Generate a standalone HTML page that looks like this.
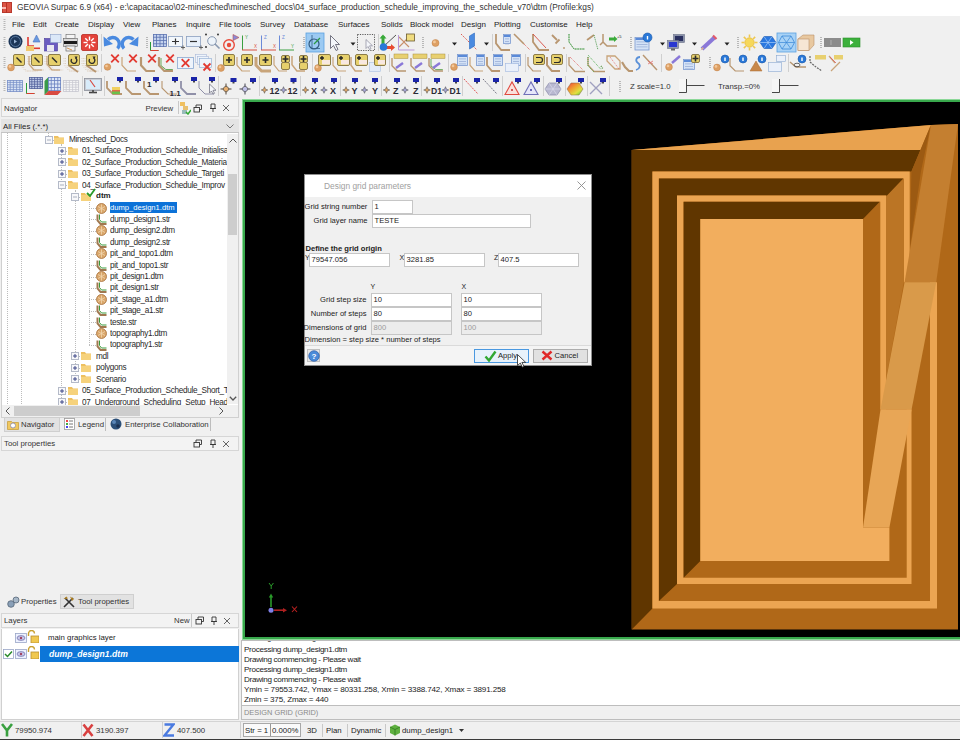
<!DOCTYPE html>
<html><head><meta charset="utf-8">
<style>
*{margin:0;padding:0;box-sizing:border-box}
html,body{width:960px;height:740px;overflow:hidden;background:#f0f0f0;font-family:"Liberation Sans",sans-serif;color:#222;position:relative}
.a{position:absolute}
.t{position:absolute;white-space:nowrap;line-height:1}
</style></head>
<body>
<!-- title bar -->
<div class="a" style="left:0;top:0;width:960px;height:16px;background:#fff"></div>
<div class="a" style="left:1.5px;top:2px;width:10.5px;height:10.5px;background:#dc5444;border:0.5px solid #b83a2e"></div><div class="a" style="left:6px;top:2.5px;width:1px;height:10px;background:#b83226"></div><div class="a" style="left:2px;top:7px;width:4px;height:1.6px;background:#f8b8b0"></div>
<div class="t" style="left:17px;top:3px;font-size:8.34px;color:#333">GEOVIA Surpac 6.9 (x64) - e:\capacitacao\02-minesched\minesched_docs\04_surface_production_schedule_improving_the_schedule_v70\dtm (Profile:kgs)</div>

<!-- menu -->
<div class="a" style="left:0;top:16px;width:960px;height:17px;background:#f0f0f0"></div>
<div id="menu" style="font-size:8px;color:#222">
<span class="t" style="left:12px;top:21px">File</span>
<span class="t" style="left:33px;top:21px">Edit</span>
<span class="t" style="left:55px;top:21px">Create</span>
<span class="t" style="left:88px;top:21px">Display</span>
<span class="t" style="left:123px;top:21px">View</span>
<span class="t" style="left:152px;top:21px">Planes</span>
<span class="t" style="left:186px;top:21px">Inquire</span>
<span class="t" style="left:219px;top:21px">File tools</span>
<span class="t" style="left:260px;top:21px">Survey</span>
<span class="t" style="left:294px;top:21px">Database</span>
<span class="t" style="left:338px;top:21px">Surfaces</span>
<span class="t" style="left:381px;top:21px">Solids</span>
<span class="t" style="left:410px;top:21px">Block model</span>
<span class="t" style="left:461px;top:21px">Design</span>
<span class="t" style="left:494px;top:21px">Plotting</span>
<span class="t" style="left:530px;top:21px">Customise</span>
<span class="t" style="left:576px;top:21px">Help</span>
</div>

<!-- TOOLBARS -->
<div id="tb"><svg class="a" style="left:0;top:0" width="960" height="100" viewBox="0 0 960 100"><rect x="3.5" y="19" width="2" height="1" fill="#b8b8b8"/><rect x="3.5" y="21" width="2" height="1" fill="#b8b8b8"/><rect x="3.5" y="23" width="2" height="1" fill="#b8b8b8"/><rect x="3.5" y="25" width="2" height="1" fill="#b8b8b8"/><rect x="3.5" y="27" width="2" height="1" fill="#b8b8b8"/><rect x="3.5" y="29" width="2" height="1" fill="#b8b8b8"/><rect x="3.5" y="37" width="2" height="1" fill="#b8b8b8"/><rect x="3.5" y="39" width="2" height="1" fill="#b8b8b8"/><rect x="3.5" y="41" width="2" height="1" fill="#b8b8b8"/><rect x="3.5" y="43" width="2" height="1" fill="#b8b8b8"/><rect x="3.5" y="45" width="2" height="1" fill="#b8b8b8"/><rect x="3.5" y="47" width="2" height="1" fill="#b8b8b8"/><circle cx="15.5" cy="41.5" r="7" fill="#1c3658"/><circle cx="15.5" cy="41.5" r="5" fill="none" stroke="#6a8ab0" stroke-width="0.8"/><path d="M14 39.5l3 2-3 2z" fill="#9ab4d4"/><path d="M28 37v9h6" stroke="#e03a30" stroke-width="1.6" fill="none"/><rect x="26" y="46" width="8" height="5" fill="#f0c870"/><path d="M33 42l3.5-7 3.5 7z" fill="#6a9ae0" stroke="#4a70c0" stroke-width="0.6"/><rect x="34" y="47.5" width="6" height="1.6" fill="#e03a30"/><rect x="44.5" y="38.5" width="13" height="12.5" fill="#6a5cc0" stroke="#4a3c98" stroke-width="0.6"/><rect x="47" y="45" width="7" height="6" fill="#e8e8f0"/><rect x="50.5" y="34.5" width="10.5" height="8" fill="#dbe8f8" stroke="#8aa0c8" stroke-width="0.6"/><rect x="66" y="34.5" width="9" height="4" fill="#f4f4f4" stroke="#666" stroke-width="0.6"/><rect x="63.5" y="38.5" width="14" height="8" fill="#d8d8d8" stroke="#666" stroke-width="0.6"/><rect x="64" y="41" width="13" height="3" fill="#1a1a1a"/><rect x="66" y="46" width="9" height="5" fill="#f0f0f0" stroke="#555" stroke-width="0.6"/><path d="M67 48l5 2" stroke="#c8782a" stroke-width="0.8"/><rect x="81.5" y="34.5" width="16" height="16" rx="1.5" fill="#e4423a" stroke="#b82a22" stroke-width="0.8"/><path d="M91.7 42.5L95.5 42.5" stroke="#fff" stroke-width="1.4"/><path d="M91.05563491861041 44.0556349186104L93.74264068711929 46.742640687119284" stroke="#fff" stroke-width="1.4"/><path d="M89.5 44.7L89.5 48.5" stroke="#fff" stroke-width="1.4"/><path d="M87.94436508138959 44.0556349186104L85.25735931288071 46.742640687119284" stroke="#fff" stroke-width="1.4"/><path d="M87.3 42.5L83.5 42.5" stroke="#fff" stroke-width="1.4"/><path d="M87.94436508138959 40.9443650813896L85.25735931288071 38.257359312880716" stroke="#fff" stroke-width="1.4"/><path d="M89.5 40.3L89.5 36.5" stroke="#fff" stroke-width="1.4"/><path d="M91.05563491861041 40.94436508138959L93.74264068711929 38.257359312880716" stroke="#fff" stroke-width="1.4"/><rect x="101" y="34" width="1" height="17" fill="#cfcfcf"/><path d="M117.5 48.5A6.3 6.3 0 0 0 108 39.5" stroke="#4a8ae0" stroke-width="3.4" fill="none"/><path d="M103.5 36.5l0.5 10 9-2.5z" fill="#4a8ae0"/><path d="M124 48.5A6.3 6.3 0 0 1 133.5 39.5" stroke="#4a8ae0" stroke-width="3.4" fill="none"/><path d="M138.5 36.5l-0.5 10-9-2.5z" fill="#4a8ae0"/><rect x="146" y="37" width="2" height="1" fill="#b8b8b8"/><rect x="146" y="39" width="2" height="1" fill="#b8b8b8"/><rect x="146" y="41" width="2" height="1" fill="#b8b8b8"/><rect x="146" y="43" width="2" height="1" fill="#b8b8b8"/><rect x="146" y="45" width="2" height="1" fill="#b8b8b8"/><rect x="146" y="47" width="2" height="1" fill="#b8b8b8"/><rect x="153.5" y="34.5" width="13" height="12" fill="#c4d2ee" stroke="#5a72b0" stroke-width="0.8"/><path d="M156.5 34v13M153 37.25h14" stroke="#5a72b0" stroke-width="0.8"/><path d="M160.0 34v13M153 40.5h14" stroke="#5a72b0" stroke-width="0.8"/><path d="M163.5 34v13M153 43.75h14" stroke="#5a72b0" stroke-width="0.8"/><path d="M150.5 42v8.5h8" stroke="#2a9a3a" stroke-width="1" fill="none"/><path d="M150.5 50.5h8" stroke="#d84030" stroke-width="1"/><rect x="168.5" y="36.5" width="14" height="10" fill="#f4f8fc" stroke="#8aa0c0" stroke-width="0.8"/><path d="M172 41.5h7M175.5 38.5v6" stroke="#333" stroke-width="1.2"/><path d="M181 47.5h4M183 45.5v4" stroke="#555" stroke-width="0.9"/><rect x="186.5" y="36.5" width="14" height="10" fill="#e8f0fa" stroke="#8aa0c0" stroke-width="0.8"/><path d="M190 41.5h7" stroke="#333" stroke-width="1.2"/><path d="M199 47.5h4M201 45.5v4" stroke="#555" stroke-width="0.9"/><circle cx="212" cy="41" r="4.3" fill="#eef4fa" stroke="#8898b0" stroke-width="1"/><path d="M215 44l4.5 4.5" stroke="#8898b0" stroke-width="1.6"/><circle cx="206" cy="34.5" r="0.9" fill="#222"/><circle cx="218" cy="34.5" r="0.9" fill="#222"/><circle cx="206" cy="47" r="0.9" fill="#222"/><circle cx="229" cy="45" r="5.3" fill="none" stroke="#e84a3a" stroke-width="1.4"/><circle cx="229" cy="45" r="2.2" fill="#e84a3a"/><path d="M233 34.5l6 3-6 3z" fill="#8a8ad8" stroke="#c0504a" stroke-width="0.6"/><path d="M242.5 35.5v14.5" stroke="#3aa040" stroke-width="1"/><path d="M242 50h15" stroke="#d85040" stroke-width="1"/><text x="245" y="39" font-family="Liberation Sans" font-size="4.5" fill="#3aa040">Y</text><text x="254" y="47.5" font-family="Liberation Sans" font-size="4.5" fill="#d85040">X</text><path d="M261.5 35.5v14.5" stroke="#6a8ad8" stroke-width="1"/><path d="M261 50h15" stroke="#d85040" stroke-width="1"/><text x="264" y="39" font-family="Liberation Sans" font-size="4.5" fill="#6a8ad8">Z</text><text x="273" y="47.5" font-family="Liberation Sans" font-size="4.5" fill="#d85040">X</text><path d="M279.5 35.5v14.5" stroke="#6a8ad8" stroke-width="1"/><path d="M279 50h15" stroke="#3aa040" stroke-width="1"/><text x="282" y="39" font-family="Liberation Sans" font-size="4.5" fill="#6a8ad8">Z</text><text x="291" y="47.5" font-family="Liberation Sans" font-size="4.5" fill="#3aa040">Y</text><rect x="303" y="37" width="2" height="1" fill="#b8b8b8"/><rect x="303" y="39" width="2" height="1" fill="#b8b8b8"/><rect x="303" y="41" width="2" height="1" fill="#b8b8b8"/><rect x="303" y="43" width="2" height="1" fill="#b8b8b8"/><rect x="303" y="45" width="2" height="1" fill="#b8b8b8"/><rect x="303" y="47" width="2" height="1" fill="#b8b8b8"/><rect x="306" y="33" width="18" height="19" fill="#9ccaf2" stroke="#5aa0e0" stroke-width="0.8"/><circle cx="314" cy="44" r="5" fill="none" stroke="#305a80" stroke-width="1.2"/><path d="M312 35v13.5h8" stroke="#305a80" stroke-width="0.8" fill="none"/><path d="M314 44l6-6" stroke="#2a9a40" stroke-width="1.3"/><path d="M330.5 35.5v13l3-3 2.5 5 2-1-2.5-5h4z" fill="#f4f6fa" stroke="#556" stroke-width="0.8"/><path d="M350.5 42.5h5l-2.5 3z" fill="#222"/><rect x="357.5" y="34.5" width="17" height="16" fill="none" stroke="#333" stroke-width="0.8" stroke-dasharray="1.2 1.2"/><path d="M366 39.5v9l2-2 1.5 3 1.5-0.7-1.5-3h3z" fill="#f4f6fa" stroke="#889" stroke-width="0.7"/><rect x="378" y="34" width="1" height="17" fill="#cfcfcf"/><path d="M383 44V36" stroke="#3aaa3a" stroke-width="3"/><path d="M379.5 38.5l3.5-4 3.5 4z" fill="#3aaa3a"/><path d="M384 47.5h9" stroke="#e84a30" stroke-width="3"/><path d="M391 44l4 3.5-4 3.5z" fill="#e84a30"/><path d="M384 46l12-11" stroke="#555" stroke-width="1"/><circle cx="383.5" cy="47" r="3.8" fill="#2a78d8"/><path d="M399 37l5 5 5-5M399 47l5-5 5 5" stroke="#c8906a" stroke-width="1.2" fill="none"/><path d="M398.5 35v15h16" stroke="#b898d8" stroke-width="1" fill="none"/><rect x="406.5" y="34" width="8" height="7" fill="#f0dc80" stroke="#6a5a30" stroke-width="0.8"/><rect x="422" y="37" width="2" height="1" fill="#b8b8b8"/><rect x="422" y="39" width="2" height="1" fill="#b8b8b8"/><rect x="422" y="41" width="2" height="1" fill="#b8b8b8"/><rect x="422" y="43" width="2" height="1" fill="#b8b8b8"/><rect x="422" y="45" width="2" height="1" fill="#b8b8b8"/><rect x="422" y="47" width="2" height="1" fill="#b8b8b8"/><circle cx="435.5" cy="43" r="3.5" fill="#dea064" stroke="#c08048" stroke-width="0.5"/><circle cx="434.45" cy="41.95" r="1.4000000000000001" fill="#f3c89a"/><path d="M452 42.5h5l-2.5 3z" fill="#222"/><path d="M461 34l16 16" stroke="#d84a40" stroke-width="0.9" stroke-dasharray="1.5 1"/><path d="M469.5 36l5-3v13l-5 3z" fill="#4a8ae0" stroke="#2a6ac0" stroke-width="0.6"/><path d="M484 42.5h5l-2.5 3z" fill="#222"/><rect x="492" y="34" width="1" height="17" fill="#cfcfcf"/><path d="M496 34v9.350000000000001l5.25 6.65h8.75" stroke="#b89670" stroke-width="1.8" fill="none"/><rect x="503.5" y="34.5" width="7" height="9" fill="#d4e2f6" stroke="#7a9ad0" stroke-width="0.8"/><rect x="504" y="35" width="6" height="2" fill="#5a8ad8"/><rect x="505" y="38.5" width="4" height="0.8" fill="#9ab0d8"/><rect x="505" y="41.0" width="4" height="0.8" fill="#9ab0d8"/><rect x="505" y="43.5" width="4" height="0.8" fill="#9ab0d8"/><path d="M514 34l10 10" stroke="#b89670" stroke-width="1.6"/><path d="M524 44l6 6" stroke="#d84a40" stroke-width="0.9" stroke-dasharray="1 1"/><path d="M533 34v8l6 8h10" stroke="#b89670" stroke-width="1.8" fill="none"/><path d="M533 34l13 14" stroke="#d84a40" stroke-width="0.9"/><path d="M552 35l5 5M555.5 43.5l4-4" stroke="#b89670" stroke-width="1.8"/><circle cx="564" cy="48" r="0.9" fill="#b89670"/><path d="M569 34v8l5 7h11" stroke="#3aa04a" stroke-width="1" stroke-dasharray="1.5 1" fill="none"/><path d="M569 34v8l5 7h11" stroke="#6aa05a" stroke-width="0.5" fill="none"/><path d="M587 40l7-5" stroke="#b89670" stroke-width="1.8"/><path d="M594 35l4 15" stroke="#5aa05a" stroke-width="1" stroke-dasharray="1.2 1"/><path d="M603 34v8l4 4h10M600 45l3-3" stroke="#b89670" stroke-width="1.5" fill="none"/><path d="M609 39h6" stroke="#3aaa3a" stroke-width="3"/><path d="M614 36l3.5 3-3.5 3z" fill="#3aaa3a"/><text x="617" y="38" font-family="Liberation Sans" font-size="4" fill="#222">+5</text><rect x="630" y="37" width="2" height="1" fill="#b8b8b8"/><rect x="630" y="39" width="2" height="1" fill="#b8b8b8"/><rect x="630" y="41" width="2" height="1" fill="#b8b8b8"/><rect x="630" y="43" width="2" height="1" fill="#b8b8b8"/><rect x="630" y="45" width="2" height="1" fill="#b8b8b8"/><rect x="630" y="47" width="2" height="1" fill="#b8b8b8"/><rect x="635.0" y="37.5" width="14" height="12.5" fill="#d4e2f6" stroke="#7a9ad0" stroke-width="0.8"/><rect x="635.5" y="38" width="13" height="2" fill="#5a8ad8"/><rect x="636.5" y="41.5" width="11" height="0.8" fill="#9ab0d8"/><rect x="636.5" y="44.0" width="11" height="0.8" fill="#9ab0d8"/><rect x="636.5" y="46.5" width="11" height="0.8" fill="#9ab0d8"/><circle cx="647.5" cy="37.5" r="4.5" fill="#2a78d8" stroke="#1a58a8" stroke-width="0.6"/><rect x="646.8" y="36.0" width="1.4" height="3.5" fill="#fff"/><path d="M660 42.5h5l-2.5 3z" fill="#222"/><rect x="673.5" y="34.5" width="11" height="8" fill="#8890a8" stroke="#6a7088" stroke-width="0.6"/><rect x="675" y="36" width="8" height="5" fill="#2a3060"/><rect x="667.5" y="40.5" width="11" height="8" fill="#9098b0" stroke="#6a7088" stroke-width="0.6"/><rect x="669" y="42" width="8" height="5" fill="#2a38d0"/><rect x="671" y="48.5" width="4" height="2" fill="#666"/><path d="M692 42.5h5l-2.5 3z" fill="#222"/><path d="M702 49l13-12" stroke="#8a78d8" stroke-width="4"/><path d="M713 35.5l3.5 3.5" stroke="#e25a6a" stroke-width="2.2"/><path d="M700.5 50.5l2-3.5 1.5 1.5z" fill="#d8b088"/><path d="M724.5 42.5h5l-2.5 3z" fill="#222"/><rect x="737" y="37" width="2" height="1" fill="#b8b8b8"/><rect x="737" y="39" width="2" height="1" fill="#b8b8b8"/><rect x="737" y="41" width="2" height="1" fill="#b8b8b8"/><rect x="737" y="43" width="2" height="1" fill="#b8b8b8"/><rect x="737" y="45" width="2" height="1" fill="#b8b8b8"/><rect x="737" y="47" width="2" height="1" fill="#b8b8b8"/><circle cx="749.5" cy="42.5" r="4.7" fill="#f6d85a" stroke="#e0b030" stroke-width="0.6"/><path d="M754.5 42.5L757.5 42.5" stroke="#eec850" stroke-width="1.6"/><path d="M753.0355339059328 46.03553390593274L755.1568542494924 48.15685424949238" stroke="#eec850" stroke-width="1.6"/><path d="M749.5 47.5L749.5 50.5" stroke="#eec850" stroke-width="1.6"/><path d="M745.9644660940672 46.03553390593274L743.8431457505076 48.15685424949238" stroke="#eec850" stroke-width="1.6"/><path d="M744.5 42.5L741.5 42.5" stroke="#eec850" stroke-width="1.6"/><path d="M745.9644660940672 38.96446609406726L743.8431457505076 36.84314575050762" stroke="#eec850" stroke-width="1.6"/><path d="M749.5 37.5L749.5 34.5" stroke="#eec850" stroke-width="1.6"/><path d="M753.0355339059328 38.96446609406726L755.1568542494924 36.84314575050762" stroke="#eec850" stroke-width="1.6"/><path d="M764 36.5h8l4 6-4 6h-8l-4-6z" fill="#2a78e0" stroke="#1a58b0" stroke-width="0.6"/><path d="M764 36.5l8 12M772 36.5l-8 12M760 42.5h16" stroke="#a8cdf8" stroke-width="0.7"/><rect x="777" y="33" width="19" height="19" fill="#a8d2f6" stroke="#5aa0e0" stroke-width="0.8"/><path d="M782 36h9l3.5 6.5-3.5 6.5h-9l-3.5-6.5z" fill="none" stroke="#3a88d8" stroke-width="0.8"/><path d="M782 36l9 13M791 36l-9 13M778.5 42.5h16" stroke="#3a88d8" stroke-width="0.7"/><path d="M798 39l5-4h11v10l-5 5.5H798z" fill="#e8c8a0" stroke="#b8906a" stroke-width="0.6"/><rect x="798" y="39" width="11" height="11.5" fill="#f6e6d4" stroke="#b8906a" stroke-width="0.6"/><rect x="820" y="37" width="2" height="1" fill="#b8b8b8"/><rect x="820" y="39" width="2" height="1" fill="#b8b8b8"/><rect x="820" y="41" width="2" height="1" fill="#b8b8b8"/><rect x="820" y="43" width="2" height="1" fill="#b8b8b8"/><rect x="820" y="45" width="2" height="1" fill="#b8b8b8"/><rect x="820" y="47" width="2" height="1" fill="#b8b8b8"/><rect x="824" y="38" width="17" height="9" fill="#8c8c8c"/><path d="M831 40v5" stroke="#aaa" stroke-width="1.2"/><rect x="843" y="38" width="17" height="9" fill="#3cb03c" stroke="#2a902a" stroke-width="0.6"/><path d="M850 40l3.5 2.5-3.5 2.5z" fill="#fff"/><rect x="3.5" y="57" width="2" height="1" fill="#b8b8b8"/><rect x="3.5" y="59" width="2" height="1" fill="#b8b8b8"/><rect x="3.5" y="61" width="2" height="1" fill="#b8b8b8"/><rect x="3.5" y="63" width="2" height="1" fill="#b8b8b8"/><rect x="3.5" y="65" width="2" height="1" fill="#b8b8b8"/><rect x="3.5" y="67" width="2" height="1" fill="#b8b8b8"/><path d="M20.0 58v7.0l5.3999999999999995 6.0h10.799999999999999" stroke="#c8a47a" stroke-width="0.7" stroke-dasharray="1 1.5" fill="none" opacity="0.6"/><path d="M21.5 58v7.0l5.3999999999999995 6.0h10.799999999999999" stroke="#c8a47a" stroke-width="0.7" stroke-dasharray="1 1.5" fill="none" opacity="0.6"/><rect x="13.5" y="54.5" width="11" height="11" rx="1.5" fill="#e6d06c" stroke="#8c7c48" stroke-width="1"/><path d="M16.5 57.5l5 5" stroke="#2a2a2a" stroke-width="1.4"/><circle cx="11" cy="67.5" r="3.4" fill="#dea064" stroke="#c08048" stroke-width="0.5"/><circle cx="9.98" cy="66.48" r="1.36" fill="#f3c89a"/><path d="M28.0 56v7.5l4.8 6.5h9.6" stroke="#c8a47a" stroke-width="0.7" stroke-dasharray="1 1.5" fill="none" opacity="0.6"/><path d="M29.5 56v7.5l4.8 6.5h9.6" stroke="#c8a47a" stroke-width="0.7" stroke-dasharray="1 1.5" fill="none" opacity="0.6"/><path d="M31.0 56v7.5l4.8 6.5h9.6" stroke="#c8a47a" stroke-width="0.7" stroke-dasharray="1 1.5" fill="none" opacity="0.6"/><path d="M29 56v8.25l4.8999999999999995 5.75h8.1" stroke="#c8a47a" stroke-width="1.2" fill="none"/><rect x="31.5" y="54.5" width="11" height="11" rx="1.5" fill="#e6d06c" stroke="#8c7c48" stroke-width="1"/><path d="M34.5 57.5l5 5" stroke="#2a2a2a" stroke-width="1.4"/><path d="M45.0 56v7.5l4.8 6.5h9.6" stroke="#c8a47a" stroke-width="0.7" stroke-dasharray="1 1.5" fill="none" opacity="0.6"/><path d="M46.5 56v7.5l4.8 6.5h9.6" stroke="#c8a47a" stroke-width="0.7" stroke-dasharray="1 1.5" fill="none" opacity="0.6"/><path d="M48.0 56v7.5l4.8 6.5h9.6" stroke="#c8a47a" stroke-width="0.7" stroke-dasharray="1 1.5" fill="none" opacity="0.6"/><path d="M49.5 56v7.5l4.8 6.5h9.6" stroke="#c8a47a" stroke-width="0.7" stroke-dasharray="1 1.5" fill="none" opacity="0.6"/><path d="M47 56v8.25l4.8999999999999995 5.75h8.1" stroke="#c8a47a" stroke-width="1.2" fill="none"/><rect x="48.5" y="54.5" width="12" height="11" rx="1.5" fill="#e6d06c" stroke="#8c7c48" stroke-width="1"/><path d="M52.0 57.5l5 5" stroke="#2a2a2a" stroke-width="1.4"/><path d="M64.0 58v7.0l4.8 6.0h9.6" stroke="#c8a47a" stroke-width="0.7" stroke-dasharray="1 1.5" fill="none" opacity="0.6"/><path d="M65.5 58v7.0l4.8 6.0h9.6" stroke="#c8a47a" stroke-width="0.7" stroke-dasharray="1 1.5" fill="none" opacity="0.6"/><path d="M68 65l10 7" stroke="#b89670" stroke-width="1.6"/><rect x="68.5" y="54.5" width="11" height="11" rx="1.5" fill="#e6d06c" stroke="#8c7c48" stroke-width="1"/><circle cx="74.0" cy="60.5" r="2.8" stroke="#2a2a2a" stroke-width="1.2" fill="none" stroke-dasharray="13 4.6" transform="rotate(-60 74.0 60.5)"/><path d="M74.5 56.4l3 0.2-1.2 2.6z" fill="#2a2a2a"/><path d="M82.0 58v7.0l4.8 6.0h9.6" stroke="#c8a47a" stroke-width="0.7" stroke-dasharray="1 1.5" fill="none" opacity="0.6"/><path d="M83.5 58v7.0l4.8 6.0h9.6" stroke="#c8a47a" stroke-width="0.7" stroke-dasharray="1 1.5" fill="none" opacity="0.6"/><path d="M85.0 58v7.0l4.8 6.0h9.6" stroke="#c8a47a" stroke-width="0.7" stroke-dasharray="1 1.5" fill="none" opacity="0.6"/><path d="M86 65l10 7" stroke="#b89670" stroke-width="2"/><rect x="86.5" y="54.5" width="11" height="11" rx="1.5" fill="#e6d06c" stroke="#8c7c48" stroke-width="1"/><circle cx="92.0" cy="60.5" r="2.8" stroke="#2a2a2a" stroke-width="1.2" fill="none" stroke-dasharray="13 4.6" transform="rotate(-60 92.0 60.5)"/><path d="M92.5 56.4l3 0.2-1.2 2.6z" fill="#2a2a2a"/><rect x="101" y="54" width="1" height="18" fill="#cfcfcf"/><circle cx="107.5" cy="67" r="3.3" fill="#dea064" stroke="#c08048" stroke-width="0.5"/><circle cx="106.51" cy="66.01" r="1.32" fill="#f3c89a"/><path d="M111.2 54.7l7.6 7.6M118.8 54.7l-7.6 7.6" stroke="#e23a32" stroke-width="1.8"/><path d="M122 57v8.25l5.25 5.75h8.75" stroke="#c8a47a" stroke-width="1.2" fill="none"/><path d="M129.2 54.7l7.6 7.6M136.8 54.7l-7.6 7.6" stroke="#e23a32" stroke-width="1.8"/><path d="M141 57v8.25l5.25 5.75h8.75" stroke="#b89670" stroke-width="2.2" fill="none"/><path d="M148.2 54.7l7.6 7.6M155.8 54.7l-7.6 7.6" stroke="#e23a32" stroke-width="1.8"/><path d="M159 57v8.25l5.25 5.75h8.75" stroke="#b89670" stroke-width="2.2" fill="none"/><path d="M161 58v7.5l4.8 4.0h7.0" stroke="#6aaa5a" stroke-width="1" fill="none"/><path d="M166.2 54.7l7.6 7.6M173.8 54.7l-7.6 7.6" stroke="#e23a32" stroke-width="1.8"/><rect x="177.5" y="57.5" width="16" height="11" fill="#eef4fb" stroke="#8aa8d0" stroke-width="0.8"/><path d="M181.7 59.2l7.6 7.6M189.3 59.2l-7.6 7.6" stroke="#e23a32" stroke-width="1.8"/><rect x="195.5" y="54.5" width="11" height="8" fill="#eef4fb" stroke="#a8b8d8" stroke-width="0.6"/><rect x="197.5" y="56.5" width="11" height="8" fill="#eef4fb" stroke="#a8b8d8" stroke-width="0.6"/><rect x="199.5" y="58.5" width="12" height="9" fill="#eef4fb" stroke="#8aa8d0" stroke-width="0.6"/><path d="M203.5 63.5l7.0 7.0M210.5 63.5l-7.0 7.0" stroke="#e23a32" stroke-width="1.8"/><rect x="215" y="54" width="1" height="18" fill="#cfcfcf"/><circle cx="221" cy="68" r="3.4" fill="#dea064" stroke="#c08048" stroke-width="0.5"/><circle cx="219.98" cy="66.98" r="1.36" fill="#f3c89a"/><rect x="223.5" y="54.5" width="11" height="11" rx="1.5" fill="#e6d06c" stroke="#8c7c48" stroke-width="1"/><path d="M226.0 60.0h6M229.0 57.0v6" stroke="#2a2a2a" stroke-width="1.6"/><path d="M237 57v8.25l4.8999999999999995 5.75h8.1" stroke="#c8a47a" stroke-width="1.2" fill="none"/><rect x="241.5" y="54.5" width="11" height="11" rx="1.5" fill="#e6d06c" stroke="#8c7c48" stroke-width="1"/><path d="M244.0 60.0h6M247.0 57.0v6" stroke="#2a2a2a" stroke-width="1.6"/><path d="M256 57v8.25l5.6 5.75h9.4" stroke="#c8a47a" stroke-width="3" fill="none"/><rect x="259.5" y="54.5" width="12" height="11" rx="1.5" fill="#e6d06c" stroke="#8c7c48" stroke-width="1"/><path d="M262.5 60.0h6M265.5 57.0v6" stroke="#2a2a2a" stroke-width="1.6"/><path d="M274 56v8.8l4.8999999999999995 6.2h8.1" stroke="#c8a47a" stroke-width="1.2" fill="none"/><rect x="281.5" y="55.5" width="8" height="7" rx="1.5" fill="#e6d06c" stroke="#8c7c48" stroke-width="1"/><path d="M282.5 59.0h6M285.5 56.0v6" stroke="#2a2a2a" stroke-width="1.6"/><rect x="281.5" y="62.5" width="8" height="7" rx="1.5" fill="#e6d06c" stroke="#8c7c48" stroke-width="1"/><path d="M292 56v8.8l4.8999999999999995 6.2h8.1" stroke="#c8a47a" stroke-width="1.5" fill="none"/><rect x="299.5" y="55.5" width="8" height="7" rx="1.5" fill="#e6d06c" stroke="#8c7c48" stroke-width="1"/><path d="M300.5 59.0h6M303.5 56.0v6" stroke="#2a2a2a" stroke-width="1.6"/><rect x="299.5" y="62.5" width="8" height="7" rx="1.5" fill="#e6d06c" stroke="#8c7c48" stroke-width="1"/><rect x="312" y="54" width="1" height="18" fill="#cfcfcf"/><circle cx="318" cy="68" r="3.4" fill="#dea064" stroke="#c08048" stroke-width="0.5"/><circle cx="316.98" cy="66.98" r="1.36" fill="#f3c89a"/><rect x="318.5" y="54.5" width="12" height="11" rx="1.5" fill="#e6d06c" stroke="#8c7c48" stroke-width="1"/><rect x="322" y="60.0" width="8" height="4.5" fill="#f8e8e0"/><path d="M320 58h4M322 56v4" stroke="#222" stroke-width="1.4"/><path d="M333 57v8.25l4.8999999999999995 5.75h8.1" stroke="#c8a47a" stroke-width="1.2" fill="none"/><rect x="337.5" y="54.5" width="12" height="11" rx="1.5" fill="#e6d06c" stroke="#8c7c48" stroke-width="1"/><rect x="341" y="60.0" width="8" height="4.5" fill="#f8e8e0"/><path d="M339 58h4M341 56v4" stroke="#222" stroke-width="1.4"/><path d="M351 57v8.25l4.199999999999999 5.75h6.800000000000001" stroke="#c8a47a" stroke-width="1.5" fill="none"/><rect x="355.5" y="54.5" width="12" height="11" rx="1.5" fill="#e6d06c" stroke="#8c7c48" stroke-width="1"/><rect x="359" y="60.0" width="8" height="4.5" fill="#f8e8e0"/><path d="M357 58h4M359 56v4" stroke="#222" stroke-width="1.4"/><rect x="369.5" y="62.5" width="11" height="9" fill="#e4ecf8" stroke="#a8c0e0" stroke-width="0.6"/><rect x="374.5" y="54.5" width="11" height="11" rx="1.5" fill="#e6d06c" stroke="#8c7c48" stroke-width="1"/><rect x="378" y="60.0" width="7" height="4.5" fill="#f8e8e0"/><path d="M376 58h4M378 56v4" stroke="#222" stroke-width="1.4"/><rect x="389" y="54" width="1" height="18" fill="#cfcfcf"/><path d="M392 58v7.700000000000001l5.25 5.3h8.75" stroke="#b89670" stroke-width="1.4" fill="none"/><rect x="394" y="54" width="14" height="4.5" fill="#e8d070" stroke="#a89040" stroke-width="0.5"/><path d="M396 68l7-5" stroke="#8a78d8" stroke-width="2.4"/><path d="M411 58v7.700000000000001l5.25 5.3h8.75" stroke="#b89670" stroke-width="1.4" fill="none"/><rect x="413" y="54" width="14" height="4.5" fill="#e8d070" stroke="#a89040" stroke-width="0.5"/><path d="M415 68l7-5" stroke="#8a78d8" stroke-width="2.4"/><path d="M429 58v7.700000000000001l5.25 5.3h8.75" stroke="#b89670" stroke-width="1.4" fill="none"/><path d="M431 59v7.0l4.8 3.6000000000000005h7.0" stroke="#6aaa5a" stroke-width="1" fill="none"/><rect x="431" y="54" width="14" height="4.5" fill="#e8d070" stroke="#a89040" stroke-width="0.5"/><path d="M433 68l7-5" stroke="#8a78d8" stroke-width="2.4"/><rect x="448" y="54" width="1" height="18" fill="#cfcfcf"/><circle cx="454" cy="67" r="3.4" fill="#dea064" stroke="#c08048" stroke-width="0.5"/><circle cx="452.98" cy="65.98" r="1.36" fill="#f3c89a"/><rect x="457.5" y="54.5" width="10" height="11" fill="#d4e2f6" stroke="#7a9ad0" stroke-width="0.8"/><rect x="458" y="55" width="9" height="2" fill="#5a8ad8"/><rect x="459" y="58.5" width="7" height="0.8" fill="#9ab0d8"/><rect x="459" y="61.0" width="7" height="0.8" fill="#9ab0d8"/><rect x="459" y="63.5" width="7" height="0.8" fill="#9ab0d8"/><path d="M470 57v8.25l4.8999999999999995 5.75h8.1" stroke="#c8a47a" stroke-width="1.2" fill="none"/><rect x="476.5" y="54.5" width="8" height="11" fill="#d4e2f6" stroke="#7a9ad0" stroke-width="0.8"/><rect x="477" y="55" width="7" height="2" fill="#5a8ad8"/><rect x="478" y="58.5" width="5" height="0.8" fill="#9ab0d8"/><rect x="478" y="61.0" width="5" height="0.8" fill="#9ab0d8"/><rect x="478" y="63.5" width="5" height="0.8" fill="#9ab0d8"/><path d="M487 57v8.25l4.8999999999999995 5.75h8.1" stroke="#b89670" stroke-width="1.8" fill="none"/><rect x="493.5" y="54.5" width="9" height="11" fill="#d4e2f6" stroke="#7a9ad0" stroke-width="0.8"/><rect x="494" y="55" width="8" height="2" fill="#5a8ad8"/><rect x="495" y="58.5" width="6" height="0.8" fill="#9ab0d8"/><rect x="495" y="61.0" width="6" height="0.8" fill="#9ab0d8"/><rect x="495" y="63.5" width="6" height="0.8" fill="#9ab0d8"/><rect x="511.5" y="54.5" width="9" height="11" fill="#d4e2f6" stroke="#7a9ad0" stroke-width="0.8"/><rect x="512" y="55" width="8" height="2" fill="#5a8ad8"/><rect x="513" y="58.5" width="6" height="0.8" fill="#9ab0d8"/><rect x="513" y="61.0" width="6" height="0.8" fill="#9ab0d8"/><rect x="513" y="63.5" width="6" height="0.8" fill="#9ab0d8"/><rect x="505.5" y="63.5" width="13" height="8" fill="#eaf0fa" stroke="#a0b8e0" stroke-width="0.6"/><rect x="525" y="54" width="1" height="18" fill="#cfcfcf"/><path d="M528 57v8.25l4.8999999999999995 5.75h8.1" stroke="#b89670" stroke-width="1.2" fill="none"/><rect x="533.5" y="54.5" width="11" height="10" rx="1.5" fill="#e6d06c" stroke="#8c7c48" stroke-width="1"/><path d="M536.0 57.5h4a2.5 2.5 0 0 1 0 5h-4" stroke="#2a2a2a" stroke-width="1.2" fill="none"/><path d="M547 57v8.25l4.8999999999999995 5.75h8.1" stroke="#b89670" stroke-width="2" fill="none"/><rect x="551.5" y="54.5" width="11" height="10" rx="1.5" fill="#e6d06c" stroke="#8c7c48" stroke-width="1"/><path d="M554.0 57.5h4a2.5 2.5 0 0 1 0 5h-4" stroke="#2a2a2a" stroke-width="1.2" fill="none"/><rect x="566" y="54" width="1" height="18" fill="#cfcfcf"/><path d="M569 57v8l6 6.5h10" stroke="#b89670" stroke-width="1.3" fill="none"/><path d="M570 57l13 13" stroke="#e05050" stroke-width="0.8" stroke-dasharray="1 1"/><path d="M588 57v8l6 6.5h11" stroke="#b89670" stroke-width="1.3" fill="none"/><path d="M588 55l13 14.5M588 57v9l6 6" stroke="#4aaa4a" stroke-width="0.9" stroke-dasharray="1 1" fill="none"/><path d="M601 66l2 3" stroke="#6aa05a" stroke-width="1.5" stroke-dasharray="1 1"/><path d="M607 56h8l5 5v8h-5l-8-8z" stroke="#c8a47a" stroke-width="1.3" fill="none"/><path d="M610 57l9 12" stroke="#e05050" stroke-width="0.7" stroke-dasharray="1 1"/><path d="M622 62l3 5 4 4h4" stroke="#b89670" stroke-width="2.2" fill="none"/><path d="M640 57c-4 0-5 4-2 6s2 6-2 7" stroke="#5a90d8" stroke-width="1.8" fill="none"/><path d="M643 55l14 15" stroke="#b89670" stroke-width="1.4"/><path d="M648 61l5 3M653 61l-5 3" stroke="#e07070" stroke-width="0.8"/><rect x="661" y="54" width="1" height="18" fill="#cfcfcf"/><circle cx="669" cy="67" r="3.4" fill="#dea064" stroke="#c08048" stroke-width="0.5"/><circle cx="667.98" cy="65.98" r="1.36" fill="#f3c89a"/><path d="M672 63l8-7" stroke="#8a78d8" stroke-width="2.5"/><rect x="683.5" y="59.5" width="11" height="10" fill="#d4e2f6" stroke="#7a9ad0" stroke-width="0.8"/><rect x="684" y="60" width="10" height="2" fill="#5a8ad8"/><rect x="685" y="63.5" width="8" height="0.8" fill="#9ab0d8"/><rect x="685" y="66.0" width="8" height="0.8" fill="#9ab0d8"/><rect x="685" y="68.5" width="8" height="0.8" fill="#9ab0d8"/><rect x="691.5" y="54.5" width="8" height="8" rx="1.5" fill="#e6d06c" stroke="#8c7c48" stroke-width="1"/><path d="M692.5 58.5h6M695.5 55.5v6" stroke="#2a2a2a" stroke-width="1.6"/><rect x="709" y="57" width="2" height="1" fill="#b8b8b8"/><rect x="709" y="59" width="2" height="1" fill="#b8b8b8"/><rect x="709" y="61" width="2" height="1" fill="#b8b8b8"/><rect x="709" y="63" width="2" height="1" fill="#b8b8b8"/><rect x="709" y="65" width="2" height="1" fill="#b8b8b8"/><rect x="709" y="67" width="2" height="1" fill="#b8b8b8"/><circle cx="717" cy="67.5" r="3.4" fill="#dea064" stroke="#c08048" stroke-width="0.5"/><circle cx="715.98" cy="66.48" r="1.36" fill="#f3c89a"/><circle cx="725" cy="59" r="4" fill="#2a78d8" stroke="#1a58a8" stroke-width="0.6"/><rect x="724.3" y="57.5" width="1.4" height="3.5" fill="#fff"/><path d="M730 58v7.700000000000001l5.25 5.3h8.75" stroke="#b89670" stroke-width="1.2" fill="none"/><circle cx="743" cy="59" r="4" fill="#2a78d8" stroke="#1a58a8" stroke-width="0.6"/><rect x="742.3" y="57.5" width="1.4" height="3.5" fill="#fff"/><path d="M750 71l6-10 6 10z" fill="#c8884a" stroke="#a86a30" stroke-width="0.5"/><circle cx="762" cy="59" r="4" fill="#2a78d8" stroke="#1a58a8" stroke-width="0.6"/><rect x="761.3" y="57.5" width="1.4" height="3.5" fill="#fff"/><rect x="776.5" y="55.5" width="9" height="6" fill="#eaf0fa" stroke="#8aa8d0" stroke-width="0.6"/><rect x="768.5" y="62.5" width="13" height="9" fill="#eaf0fa" stroke="#8aa8d0" stroke-width="0.6"/><rect x="788" y="54" width="1" height="18" fill="#cfcfcf"/><path d="M790 62l6 5h10" stroke="#b89670" stroke-width="1.4" fill="none"/><ellipse cx="797" cy="65" rx="3" ry="1.8" fill="none" stroke="#444" stroke-width="0.8"/><circle cx="802" cy="59" r="4" fill="#2a78d8" stroke="#1a58a8" stroke-width="0.6"/><rect x="801.3" y="57.5" width="1.4" height="3.5" fill="#fff"/><path d="M810 56v6l6 5 6 4" stroke="#666" stroke-width="1.2" fill="none" stroke-dasharray="2 1"/><rect x="815" y="55" width="11" height="4.5" fill="#e8d070"/><path d="M829 56l6 7M831 71l9-9" stroke="#c8a47a" stroke-width="1.3" fill="none"/><path d="M830 57l6 6" stroke="#e06060" stroke-width="0.8"/><rect x="834" y="55" width="9" height="4.5" fill="#e8d070"/><rect x="3.5" y="80" width="2" height="1" fill="#b8b8b8"/><rect x="3.5" y="82" width="2" height="1" fill="#b8b8b8"/><rect x="3.5" y="84" width="2" height="1" fill="#b8b8b8"/><rect x="3.5" y="86" width="2" height="1" fill="#b8b8b8"/><rect x="3.5" y="88" width="2" height="1" fill="#b8b8b8"/><rect x="3.5" y="90" width="2" height="1" fill="#b8b8b8"/><rect x="7.5" y="80.5" width="15" height="11" fill="#dce6f6" stroke="#7890c8" stroke-width="0.8"/><path d="M10.2 80v12M7 82.4h16" stroke="#7890c8" stroke-width="0.8"/><path d="M13.4 80v12M7 84.8h16" stroke="#7890c8" stroke-width="0.8"/><path d="M16.6 80v12M7 87.2h16" stroke="#7890c8" stroke-width="0.8"/><path d="M19.8 80v12M7 89.6h16" stroke="#7890c8" stroke-width="0.8"/><rect x="29.5" y="77.5" width="13" height="11" fill="#c4d0ea" stroke="#50609a" stroke-width="0.8"/><path d="M31.8 77v12M29 79.4h14" stroke="#50609a" stroke-width="0.8"/><path d="M34.6 77v12M29 81.8h14" stroke="#50609a" stroke-width="0.8"/><path d="M37.4 77v12M29 84.2h14" stroke="#50609a" stroke-width="0.8"/><path d="M40.2 77v12M29 86.6h14" stroke="#50609a" stroke-width="0.8"/><path d="M26.5 83v10.5h8" stroke="#2a9a3a" stroke-width="1" fill="none"/><path d="M26.5 93.5h8" stroke="#d84030" stroke-width="1"/><path d="M44.5 81l4-4v14l-4 4z" fill="#3a9a4a"/><path d="M44.5 95l4-4h13l-4 4z" fill="#d84a40"/><rect x="48.5" y="77.5" width="12" height="13" fill="#dce6f6" stroke="#6880c0" stroke-width="0.8"/><path d="M51.25 77v14M48 80.5h13" stroke="#6880c0" stroke-width="0.8"/><path d="M54.5 77v14M48 84.0h13" stroke="#6880c0" stroke-width="0.8"/><path d="M57.75 77v14M48 87.5h13" stroke="#6880c0" stroke-width="0.8"/><rect x="63.5" y="80.5" width="15" height="11" fill="#f8f8f8" stroke="#c8c8d0" stroke-width="0.8"/><path d="M66.2 80v12M63 82.4h16" stroke="#c8c8d0" stroke-width="0.8"/><path d="M69.4 80v12M63 84.8h16" stroke="#c8c8d0" stroke-width="0.8"/><path d="M72.6 80v12M63 87.2h16" stroke="#c8c8d0" stroke-width="0.8"/><path d="M75.8 80v12M63 89.6h16" stroke="#c8c8d0" stroke-width="0.8"/><rect x="82" y="76" width="1" height="20" fill="#cfcfcf"/><rect x="84.5" y="78.5" width="17" height="12" fill="#c8ccd4" stroke="#8a8e98" stroke-width="0.8"/><rect x="86" y="80" width="14" height="9" fill="#d8ecfa"/><path d="M90 80l5 7" stroke="#d84a40" stroke-width="1.2"/><path d="M89 92.5h8" stroke="#444" stroke-width="1.6"/><rect x="92" y="90" width="2" height="2.5" fill="#555"/><rect x="104" y="76" width="1" height="20" fill="#cfcfcf"/><path d="M107 81v7l6 6h9" stroke="#b89670" stroke-width="1.8" fill="none"/><rect x="112" y="87" width="8" height="7" fill="#f0d060"/><rect x="112" y="90" width="8" height="4" fill="#e06a4a"/><rect x="112" y="91.5" width="8" height="2.5" fill="#6ac04a"/><rect x="117" y="77" width="6" height="4" fill="#1a24a8"/><rect x="119" y="81" width="2" height="1.5" fill="#444"/><path d="M126 81v7l6 6h9" stroke="#b89670" stroke-width="1.8" fill="none"/><rect x="135" y="77" width="6" height="4" fill="#1a24a8"/><rect x="137" y="81" width="2" height="1.5" fill="#444"/><path d="M144 81v7l6 6h9" stroke="#b89670" stroke-width="1.8" fill="none"/><text x="147" y="87" font-family="Liberation Sans" font-weight="bold" font-size="8" fill="#2a2a35">1</text><rect x="153" y="77" width="6" height="4" fill="#1a24a8"/><rect x="155" y="81" width="2" height="1.5" fill="#444"/><path d="M162 81v7l6 6h9" stroke="#b89670" stroke-width="1.1" fill="none"/><text x="169.5" y="95.5" font-family="Liberation Sans" font-weight="bold" font-size="8" fill="#2a2a35">1.1</text><rect x="172" y="77" width="6" height="4" fill="#1a24a8"/><rect x="174" y="81" width="2" height="1.5" fill="#444"/><path d="M181 81v7l6 6h9" stroke="#9090a8" stroke-width="1.8" fill="none"/><rect x="191" y="77" width="6" height="4" fill="#1a24a8"/><rect x="193" y="81" width="2" height="1.5" fill="#444"/><path d="M199 81v7l6 6h9" stroke="#9090a8" stroke-width="1" fill="none"/><path d="M209.5 84v9l2-2 1.5 3 1.5-0.7-1.5-3h3z" fill="#f4f6fa" stroke="#667" stroke-width="0.7"/><rect x="209" y="77" width="6" height="4" fill="#1a24a8"/><rect x="211" y="81" width="2" height="1.5" fill="#444"/><rect x="218" y="76" width="1" height="20" fill="#cfcfcf"/><path d="M226 83.5L226.9 88.1L231.5 89L226.9 89.9L226 94.5L225.1 89.9L220.5 89L225.1 88.1z" fill="#e0a868" stroke="#444" stroke-width="0.5"/><circle cx="226" cy="89" r="2.6" fill="#e8b070" stroke="#444" stroke-width="0.6"/><rect x="230.5" y="78" width="6" height="4" fill="#1a24a8"/><rect x="232.5" y="82" width="2" height="1.5" fill="#444"/><path d="M245 83.5L245.9 88.1L250.5 89L245.9 89.9L245 94.5L244.1 89.9L239.5 89L244.1 88.1z" fill="#a8a8d8" stroke="#444" stroke-width="0.5"/><circle cx="245" cy="89" r="2.6" fill="#c0c0e8" stroke="#444" stroke-width="0.6"/><rect x="250" y="78" width="6" height="4" fill="#1a24a8"/><rect x="252" y="82" width="2" height="1.5" fill="#444"/><rect x="259" y="76" width="1" height="20" fill="#cfcfcf"/><path d="M264.5 86.7L265.4 89.1L267.8 90L265.4 90.9L264.5 93.3L263.6 90.9L261.2 90L263.6 89.1z" fill="#e0a868" stroke="#444" stroke-width="0.5"/><text x="269.5" y="94" font-family="Liberation Sans" font-weight="bold" font-size="9" fill="#2a2a35">12</text><path d="M283.5 86.7L284.4 89.1L286.8 90L284.4 90.9L283.5 93.3L282.6 90.9L280.2 90L282.6 89.1z" fill="#a8a8d8" stroke="#444" stroke-width="0.5"/><text x="287.5" y="94" font-family="Liberation Sans" font-weight="bold" font-size="9" fill="#2a2a35">12</text><rect x="272" y="78" width="6" height="4" fill="#1a24a8"/><rect x="274" y="82" width="2" height="1.5" fill="#444"/><rect x="290.5" y="78" width="6" height="4" fill="#1a24a8"/><rect x="292.5" y="82" width="2" height="1.5" fill="#444"/><rect x="300" y="76" width="1" height="20" fill="#cfcfcf"/><path d="M305.5 86.7L306.4 89.1L308.8 90L306.4 90.9L305.5 93.3L304.6 90.9L302.2 90L304.6 89.1z" fill="#e0a868" stroke="#444" stroke-width="0.5"/><text x="311" y="94" font-family="Liberation Sans" font-weight="bold" font-size="9" fill="#2a2a35">X</text><path d="M324 86.7L324.9 89.1L327.3 90L324.9 90.9L324 93.3L323.1 90.9L320.7 90L323.1 89.1z" fill="#a8a8d8" stroke="#444" stroke-width="0.5"/><text x="330" y="94" font-family="Liberation Sans" font-weight="bold" font-size="9" fill="#2a2a35">X</text><rect x="312" y="78" width="6" height="4" fill="#1a24a8"/><rect x="314" y="82" width="2" height="1.5" fill="#444"/><rect x="331" y="78" width="6" height="4" fill="#1a24a8"/><rect x="333" y="82" width="2" height="1.5" fill="#444"/><rect x="340" y="76" width="1" height="20" fill="#cfcfcf"/><path d="M346 86.7L346.9 89.1L349.3 90L346.9 90.9L346 93.3L345.1 90.9L342.7 90L345.1 89.1z" fill="#e0a868" stroke="#444" stroke-width="0.5"/><text x="351.5" y="94" font-family="Liberation Sans" font-weight="bold" font-size="9" fill="#2a2a35">Y</text><path d="M364.5 86.7L365.4 89.1L367.8 90L365.4 90.9L364.5 93.3L363.6 90.9L361.2 90L363.6 89.1z" fill="#a8a8d8" stroke="#444" stroke-width="0.5"/><text x="372" y="94" font-family="Liberation Sans" font-weight="bold" font-size="9" fill="#2a2a35">Y</text><rect x="352" y="78" width="6" height="4" fill="#1a24a8"/><rect x="354" y="82" width="2" height="1.5" fill="#444"/><rect x="372" y="78" width="6" height="4" fill="#1a24a8"/><rect x="374" y="82" width="2" height="1.5" fill="#444"/><rect x="381" y="76" width="1" height="20" fill="#cfcfcf"/><path d="M386.5 86.7L387.4 89.1L389.8 90L387.4 90.9L386.5 93.3L385.6 90.9L383.2 90L385.6 89.1z" fill="#e0a868" stroke="#444" stroke-width="0.5"/><text x="393" y="94" font-family="Liberation Sans" font-weight="bold" font-size="9" fill="#2a2a35">Z</text><path d="M405 86.7L405.9 89.1L408.3 90L405.9 90.9L405 93.3L404.1 90.9L401.7 90L404.1 89.1z" fill="#a8a8d8" stroke="#444" stroke-width="0.5"/><text x="413" y="94" font-family="Liberation Sans" font-weight="bold" font-size="9" fill="#2a2a35">Z</text><rect x="394" y="78" width="6" height="4" fill="#1a24a8"/><rect x="396" y="82" width="2" height="1.5" fill="#444"/><rect x="413" y="78" width="6" height="4" fill="#1a24a8"/><rect x="415" y="82" width="2" height="1.5" fill="#444"/><rect x="421" y="76" width="1" height="20" fill="#cfcfcf"/><path d="M427 86.7L427.9 89.1L430.3 90L427.9 90.9L427 93.3L426.1 90.9L423.7 90L426.1 89.1z" fill="#e0a868" stroke="#444" stroke-width="0.5"/><text x="431" y="94" font-family="Liberation Sans" font-weight="bold" font-size="8.6" fill="#2a2a35">D1</text><path d="M445.5 86.7L446.4 89.1L448.8 90L446.4 90.9L445.5 93.3L444.6 90.9L442.2 90L444.6 89.1z" fill="#a8a8d8" stroke="#444" stroke-width="0.5"/><text x="449.5" y="94" font-family="Liberation Sans" font-weight="bold" font-size="8.6" fill="#2a2a35">D1</text><rect x="434" y="78" width="6" height="4" fill="#1a24a8"/><rect x="436" y="82" width="2" height="1.5" fill="#444"/><rect x="453" y="78" width="6" height="4" fill="#1a24a8"/><rect x="455" y="82" width="2" height="1.5" fill="#444"/><rect x="462" y="76" width="1" height="20" fill="#cfcfcf"/><path d="M464 79l14 15" stroke="#e05050" stroke-width="1" stroke-dasharray="1.5 1"/><rect x="474" y="78" width="6" height="4" fill="#1a24a8"/><rect x="476" y="82" width="2" height="1.5" fill="#444"/><path d="M483 79l14 15" stroke="#707080" stroke-width="1" stroke-dasharray="1.5 1"/><rect x="493" y="78" width="6" height="4" fill="#1a24a8"/><rect x="495" y="82" width="2" height="1.5" fill="#444"/><rect x="502" y="76" width="1" height="20" fill="#cfcfcf"/><path d="M505 94.5l7-12.5 7 12.5z" fill="#fbe0dc" stroke="#e04a40" stroke-width="1.1"/><circle cx="512" cy="90" r="1" fill="#c03030"/><rect x="515" y="78" width="6" height="4" fill="#1a24a8"/><rect x="517" y="82" width="2" height="1.5" fill="#444"/><path d="M524 94.5l7-12.5 7 12.5z" fill="#e6e6fa" stroke="#7070b8" stroke-width="1.1"/><circle cx="531" cy="90" r="1" fill="#4040a0"/><rect x="534" y="78" width="6" height="4" fill="#1a24a8"/><rect x="536" y="82" width="2" height="1.5" fill="#444"/><rect x="543" y="76" width="1" height="20" fill="#cfcfcf"/><path d="M549 83h8l4 6-4 6h-8l-4-6z" fill="#b8b8d0" stroke="#8888a8" stroke-width="0.7"/><path d="M549 83l8 12M557 83l-8 12M545 89h16" stroke="#e0e0f0" stroke-width="0.6"/><rect x="556" y="78" width="6" height="4" fill="#1a24a8"/><rect x="558" y="82" width="2" height="1.5" fill="#444"/><rect x="565" y="76" width="1" height="20" fill="#cfcfcf"/><defs><linearGradient id="rb" x1="0" y1="0" x2="1" y2="1"><stop offset="0" stop-color="#f04040"/><stop offset="0.4" stop-color="#f0a030"/><stop offset="0.7" stop-color="#e0e040"/><stop offset="1" stop-color="#40c040"/></linearGradient></defs><path d="M571 83h8l4 6-4 6h-8l-4-6z" fill="url(#rb)" stroke="#8a6a40" stroke-width="0.5"/><rect x="578" y="78" width="6" height="4" fill="#1a24a8"/><rect x="580" y="82" width="2" height="1.5" fill="#444"/><rect x="587" y="76" width="1" height="20" fill="#cfcfcf"/><path d="M590 82l12 12M602 82l-12 12" stroke="#a0a0c0" stroke-width="1.4"/><rect x="600" y="78" width="6" height="4" fill="#1a24a8"/><rect x="602" y="82" width="2" height="1.5" fill="#444"/><rect x="609" y="76" width="1" height="20" fill="#cfcfcf"/><rect x="619" y="81" width="2" height="1" fill="#b8b8b8"/><rect x="619" y="83" width="2" height="1" fill="#b8b8b8"/><rect x="619" y="85" width="2" height="1" fill="#b8b8b8"/><rect x="619" y="87" width="2" height="1" fill="#b8b8b8"/><rect x="619" y="89" width="2" height="1" fill="#b8b8b8"/><rect x="619" y="91" width="2" height="1" fill="#b8b8b8"/><text x="630" y="89" font-family="Liberation Sans" font-size="7.8" fill="#333">Z scale=1.0</text><rect x="679" y="79" width="7" height="13" fill="#f6f6f6"/><path d="M679 92.5h7.5V79M686.5 85.5h18" stroke="#333" stroke-width="0.9" fill="none"/><text x="718" y="89" font-family="Liberation Sans" font-size="7.8" fill="#333">Transp.=0%</text><rect x="772" y="79" width="7" height="13" fill="#f6f6f6"/><path d="M772 92.5h7.5V79M779.5 85.5h19" stroke="#333" stroke-width="0.9" fill="none"/></svg></div><!--/tb-->

<!-- viewport -->
<div class="a" style="left:242px;top:99px;width:718px;height:541px;background:#38a84c;border:1px solid #8cd898;border-right:none"></div>
<div class="a" style="left:245px;top:102px;width:715px;height:535px;background:#000;overflow:hidden">
<svg width="715" height="535" viewBox="245 102 715 535" style="position:absolute;left:0;top:0" shape-rendering="geometricPrecision">
<polygon fill="#b06818" points="631.7,150 931,125 958,124 958,629.5 631.7,629.5"/>
<polygon fill="#e8a24f" points="631.7,150 931,125 920.5,150"/>
<polygon fill="#603600" points="631.7,150 920.5,150 911.4,171.5 652.4,171.5 652.4,608.4 631.7,629.5"/>
<polygon fill="#9c5a12" points="930.8,125 911.4,171.5 909.7,250 921,171"/>
<polygon fill="#eca552" points="652.4,171.5 909.7,171.5 909.7,282.2 937,282.2 937,608.4 652.4,608.4"/>
<polygon fill="#b06818" points="658.9,178.5 903.8,178.5 903.8,282.2 930,282.2 930,601 658.9,601"/>
<polygon fill="#bb7525" points="886,195.5 903.8,178.5 903.8,282.2 886,380"/>
<polygon fill="#603600" points="658.9,178.5 903.2,178.5 887,195.5 677,195.5 677,584 658.9,601"/>
<polygon fill="#eca552" points="677,195.5 886,195.5 886,409.5 911.5,409.5 911.5,584 677,584"/>
<polygon fill="#b06818" points="683.6,201.8 880.3,201.8 880.3,409.5 906.7,409.5 906.7,577.8 683.6,577.8"/>
<polygon fill="#603600" points="683.6,201.8 879.7,201.8 863,219 700.3,219 700.3,561 683.6,577.8"/>
<polygon fill="#f2ae5e" points="700.3,219 863,219 863,527.6 889.4,527.6 889.4,561 700.3,561"/>
<polygon fill="#c47f30" points="931,125 958,124 936.2,282.2 904.6,282.2"/>
<polygon fill="#d99a4a" points="904.6,282.2 936.2,282.2 911.6,409.5 880.5,409.5"/>
<polygon fill="#e8a656" points="880.5,409.5 911.6,409.5 889.4,527.6 863,527.6"/>
<path d="M271 607V596" stroke="#2a9a2a" stroke-width="1.6"/><path d="M268.8 597.5l2.2-4 2.2 4z" fill="#2a9a2a"/>
<path d="M274 610.2h10" stroke="#b02020" stroke-width="1.6"/><path d="M283 608l4 2.2-4 2.2z" fill="#b02020"/>
<circle cx="271" cy="610.2" r="2.5" fill="#8080e8"/>
<path d="M269 583l2.2 3 2.2-3M271.2 586v3" stroke="#2a9a2a" stroke-width="1" fill="none"/>
<path d="M292 606.5l5 5.5M297 606.5l-5 5.5" stroke="#b82020" stroke-width="1.1"/>
</svg>
</div>

<!-- left panel -->
<div id="left"><div class="a" style="left:0;top:97px;width:241px;height:623px;background:#f0f0f0"></div>
<div class="a" style="left:1px;top:98px;width:238px;height:19px;background:#f3f3f3;border:1px solid #d6d6d6"></div>
<div class="t" style="left:4px;top:105px;font-size:7.8px;color:#333">Navigator</div>
<div class="t" style="left:145.5px;top:105px;font-size:7.8px;color:#333">Preview</div>
<div class="a" style="left:178px;top:101px;width:1px;height:13px;background:#c8c8c8"></div>
<svg class="a" style="left:179px;top:102px" width="12" height="13"><rect x="1" y="0" width="5" height="4" fill="#f0c060"/><rect x="4" y="4" width="5" height="4" fill="#e8c070"/><rect x="3" y="8" width="5" height="4" fill="#9bb"/><path d="M7 10l2 2 3-4" stroke="#3a3" stroke-width="1.5" fill="none"/></svg>
<svg class="a" style="left:193px;top:103.5px" width="10" height="9"><rect x="1" y="3.5" width="5.5" height="4.5" fill="none" stroke="#333" stroke-width="0.9"/><path d="M3 3.5V1h5.5v4.5H6.5" fill="none" stroke="#333" stroke-width="0.9"/></svg>
<svg class="a" style="left:209px;top:103px" width="8" height="10"><path d="M2 1h4v4.5h-4z" fill="none" stroke="#333" stroke-width="0.9"/><path d="M1 5.5h6M4 6v3" stroke="#333" stroke-width="0.9"/></svg>
<svg class="a" style="left:222px;top:104px" width="8" height="8"><path d="M1 1l6 6M7 1l-6 6" stroke="#555" stroke-width="0.9"/></svg>
<div class="a" style="left:1px;top:119px;width:238px;height:14px;background:#e4e4e4;border-bottom:1px solid #c4c4c4"></div>
<div class="t" style="left:3px;top:122.5px;font-size:7.8px;color:#222">All Files (.*.*)</div>
<svg class="a" style="left:226px;top:124px" width="8" height="5"><path d="M0.5 0.5l3.5 3.5 3.5-3.5" stroke="#777" fill="none"/></svg>
<div class="a" style="left:1px;top:133px;width:238px;height:285px;background:#fff;border:1px solid #d0d0d0;border-top:none"></div>
<div class="a" style="left:7px;top:133px;width:0;height:271px;border-left:1px dotted #bcbcbc"></div>
<div class="a" style="left:21px;top:133px;width:0;height:271px;border-left:1px dotted #bcbcbc"></div>
<div class="a" style="left:48px;top:133px;width:0;height:3px;border-left:1px dotted #bcbcbc"></div>
<div class="a" style="left:61px;top:144px;width:0;height:260px;border-left:1px dotted #bcbcbc"></div>
<div class="a" style="left:75px;top:190px;width:0;height:188px;border-left:1px dotted #bcbcbc"></div>
<div class="a" style="left:89px;top:202px;width:0;height:143px;border-left:1px dotted #bcbcbc"></div>
<div class="a" style="left:52.5px;top:140px;width:2.5px;height:0;border-top:1px dotted #bcbcbc"></div>
<svg class="a" style="left:44.5px;top:135.5px" width="8" height="8"><rect x="0.5" y="0.5" width="7" height="7" fill="#f8f8fa" stroke="#b4bac8"/><path d="M2 4h4" stroke="#a0a8b8" stroke-width="0.9"/></svg>
<svg class="a" style="left:54px;top:134.5px" width="12" height="10"><path d="M0 1h4l1 1.5h5v6.5h-10z" fill="#eec060"/><rect x="0" y="3" width="10" height="6" fill="#f6d27c"/></svg>
<div class="t" style="left:69px;top:133.9px;font-size:8.2px;letter-spacing:-0.3px;color:#2a2a2a;width:158px;overflow:hidden;line-height:12px;height:12px">Minesched_Docs</div>
<div class="a" style="left:65.5px;top:151px;width:3.5px;height:0;border-top:1px dotted #bcbcbc"></div>
<svg class="a" style="left:57.5px;top:146.92px" width="8" height="8"><rect x="0.5" y="0.5" width="7" height="7" fill="#f8f8fa" stroke="#b4bac8"/><path d="M2 4h4M4 2v4" stroke="#303a80" stroke-width="0.9"/></svg>
<svg class="a" style="left:68px;top:145.92px" width="12" height="10"><path d="M0 1h4l1 1.5h5v6.5h-10z" fill="#eec060"/><rect x="0" y="3" width="10" height="6" fill="#f6d27c"/></svg>
<div class="t" style="left:82px;top:145.32px;font-size:8.2px;letter-spacing:-0.3px;color:#2a2a2a;width:145px;overflow:hidden;line-height:12px;height:12px">01_Surface_Production_Schedule_Initialisa</div>
<div class="a" style="left:65.5px;top:162px;width:3.5px;height:0;border-top:1px dotted #bcbcbc"></div>
<svg class="a" style="left:57.5px;top:158.34px" width="8" height="8"><rect x="0.5" y="0.5" width="7" height="7" fill="#f8f8fa" stroke="#b4bac8"/><path d="M2 4h4M4 2v4" stroke="#303a80" stroke-width="0.9"/></svg>
<svg class="a" style="left:68px;top:157.34px" width="12" height="10"><path d="M0 1h4l1 1.5h5v6.5h-10z" fill="#eec060"/><rect x="0" y="3" width="10" height="6" fill="#f6d27c"/></svg>
<div class="t" style="left:82px;top:156.74px;font-size:8.2px;letter-spacing:-0.3px;color:#2a2a2a;width:145px;overflow:hidden;line-height:12px;height:12px">02_Surface_Production_Schedule_Materia</div>
<div class="a" style="left:65.5px;top:174px;width:3.5px;height:0;border-top:1px dotted #bcbcbc"></div>
<svg class="a" style="left:57.5px;top:169.76px" width="8" height="8"><rect x="0.5" y="0.5" width="7" height="7" fill="#f8f8fa" stroke="#b4bac8"/><path d="M2 4h4M4 2v4" stroke="#303a80" stroke-width="0.9"/></svg>
<svg class="a" style="left:68px;top:168.76px" width="12" height="10"><path d="M0 1h4l1 1.5h5v6.5h-10z" fill="#eec060"/><rect x="0" y="3" width="10" height="6" fill="#f6d27c"/></svg>
<div class="t" style="left:82px;top:168.16px;font-size:8.2px;letter-spacing:-0.3px;color:#2a2a2a;width:145px;overflow:hidden;line-height:12px;height:12px">03_Surface_Production_Schedule_Targeti</div>
<div class="a" style="left:65.5px;top:185px;width:3.5px;height:0;border-top:1px dotted #bcbcbc"></div>
<svg class="a" style="left:57.5px;top:181.18px" width="8" height="8"><rect x="0.5" y="0.5" width="7" height="7" fill="#f8f8fa" stroke="#b4bac8"/><path d="M2 4h4" stroke="#a0a8b8" stroke-width="0.9"/></svg>
<svg class="a" style="left:68px;top:180.18px" width="12" height="10"><path d="M0 1h4l1 1.5h5v6.5h-10z" fill="#eec060"/><rect x="0" y="3" width="10" height="6" fill="#f6d27c"/></svg>
<div class="t" style="left:82px;top:179.58px;font-size:8.2px;letter-spacing:-0.3px;color:#2a2a2a;width:145px;overflow:hidden;line-height:12px;height:12px">04_Surface_Production_Schedule_Improv</div>
<div class="a" style="left:79px;top:197px;width:3px;height:0;border-top:1px dotted #bcbcbc"></div>
<svg class="a" style="left:71px;top:192.6px" width="8" height="8"><rect x="0.5" y="0.5" width="7" height="7" fill="#f8f8fa" stroke="#b4bac8"/><path d="M2 4h4" stroke="#a0a8b8" stroke-width="0.9"/></svg>
<svg class="a" style="left:81px;top:191.6px" width="12" height="10"><path d="M0 1h4l1 1.5h5v6.5h-10z" fill="#eec060"/><rect x="0" y="3" width="10" height="6" fill="#f6d27c"/></svg>
<svg class="a" style="left:86px;top:187.6px" width="10" height="9"><path d="M1 5l3 3 5-7" stroke="#2a9a2a" stroke-width="1.8" fill="none"/></svg>
<div class="t" style="left:96px;top:192.1px;font-size:8px;font-weight:bold;color:#222">dtm</div>
<div class="a" style="left:89px;top:208px;width:7px;height:0;border-top:1px dotted #bcbcbc"></div>
<svg class="a" style="left:96px;top:202.51999999999998px" width="11" height="11"><circle cx="5.5" cy="5.5" r="5" fill="#d9a66a" stroke="#a8703a" stroke-width="0.8"/><path d="M5.5 1.5v8M2 3.5l7 4M9 3.5l-7 4" stroke="#f3d7b0" stroke-width="0.8"/></svg>
<div class="a" style="left:109.5px;top:201.82px;width:67px;height:11.5px;background:#0c72d8"></div>
<div class="t" style="left:110px;top:204.01999999999998px;font-size:7.6px;color:#fff">dump_design1.dtm</div>
<div class="a" style="left:89px;top:219px;width:7px;height:0;border-top:1px dotted #bcbcbc"></div>
<svg class="a" style="left:96px;top:213.94px" width="11" height="11"><path d="M1.5 0.5v6l3 3.5h6" stroke="#a07850" stroke-width="2" fill="none"/><path d="M3.5 0.5v5l2 2.5h5" stroke="#3a9a3a" stroke-width="1" fill="none"/></svg>
<div class="t" style="left:110px;top:213.84px;font-size:8.2px;letter-spacing:-0.3px;color:#2a2a2a;width:117px;overflow:hidden;line-height:12px;height:12px">dump_design1.str</div>
<div class="a" style="left:89px;top:231px;width:7px;height:0;border-top:1px dotted #bcbcbc"></div>
<svg class="a" style="left:96px;top:225.36px" width="11" height="11"><circle cx="5.5" cy="5.5" r="5" fill="#d9a66a" stroke="#a8703a" stroke-width="0.8"/><path d="M5.5 1.5v8M2 3.5l7 4M9 3.5l-7 4" stroke="#f3d7b0" stroke-width="0.8"/></svg>
<div class="t" style="left:110px;top:225.26000000000002px;font-size:8.2px;letter-spacing:-0.3px;color:#2a2a2a;width:117px;overflow:hidden;line-height:12px;height:12px">dump_design2.dtm</div>
<div class="a" style="left:89px;top:242px;width:7px;height:0;border-top:1px dotted #bcbcbc"></div>
<svg class="a" style="left:96px;top:236.78px" width="11" height="11"><path d="M1.5 0.5v6l3 3.5h6" stroke="#a07850" stroke-width="2" fill="none"/><path d="M3.5 0.5v5l2 2.5h5" stroke="#3a9a3a" stroke-width="1" fill="none"/></svg>
<div class="t" style="left:110px;top:236.68px;font-size:8.2px;letter-spacing:-0.3px;color:#2a2a2a;width:117px;overflow:hidden;line-height:12px;height:12px">dump_design2.str</div>
<div class="a" style="left:89px;top:254px;width:7px;height:0;border-top:1px dotted #bcbcbc"></div>
<svg class="a" style="left:96px;top:248.2px" width="11" height="11"><circle cx="5.5" cy="5.5" r="5" fill="#d9a66a" stroke="#a8703a" stroke-width="0.8"/><path d="M5.5 1.5v8M2 3.5l7 4M9 3.5l-7 4" stroke="#f3d7b0" stroke-width="0.8"/></svg>
<div class="t" style="left:110px;top:248.1px;font-size:8.2px;letter-spacing:-0.3px;color:#2a2a2a;width:117px;overflow:hidden;line-height:12px;height:12px">pit_and_topo1.dtm</div>
<div class="a" style="left:89px;top:265px;width:7px;height:0;border-top:1px dotted #bcbcbc"></div>
<svg class="a" style="left:96px;top:259.62px" width="11" height="11"><path d="M1.5 0.5v6l3 3.5h6" stroke="#a07850" stroke-width="2" fill="none"/><path d="M3.5 0.5v5l2 2.5h5" stroke="#3a9a3a" stroke-width="1" fill="none"/></svg>
<div class="t" style="left:110px;top:259.52px;font-size:8.2px;letter-spacing:-0.3px;color:#2a2a2a;width:117px;overflow:hidden;line-height:12px;height:12px">pit_and_topo1.str</div>
<div class="a" style="left:89px;top:277px;width:7px;height:0;border-top:1px dotted #bcbcbc"></div>
<svg class="a" style="left:96px;top:271.03999999999996px" width="11" height="11"><circle cx="5.5" cy="5.5" r="5" fill="#d9a66a" stroke="#a8703a" stroke-width="0.8"/><path d="M5.5 1.5v8M2 3.5l7 4M9 3.5l-7 4" stroke="#f3d7b0" stroke-width="0.8"/></svg>
<div class="t" style="left:110px;top:270.93999999999994px;font-size:8.2px;letter-spacing:-0.3px;color:#2a2a2a;width:117px;overflow:hidden;line-height:12px;height:12px">pit_design1.dtm</div>
<div class="a" style="left:89px;top:288px;width:7px;height:0;border-top:1px dotted #bcbcbc"></div>
<svg class="a" style="left:96px;top:282.46000000000004px" width="11" height="11"><path d="M1.5 0.5v6l3 3.5h6" stroke="#a07850" stroke-width="2" fill="none"/><path d="M3.5 0.5v5l2 2.5h5" stroke="#3a9a3a" stroke-width="1" fill="none"/></svg>
<div class="t" style="left:110px;top:282.36px;font-size:8.2px;letter-spacing:-0.3px;color:#2a2a2a;width:117px;overflow:hidden;line-height:12px;height:12px">pit_design1.str</div>
<div class="a" style="left:89px;top:299px;width:7px;height:0;border-top:1px dotted #bcbcbc"></div>
<svg class="a" style="left:96px;top:293.88px" width="11" height="11"><circle cx="5.5" cy="5.5" r="5" fill="#d9a66a" stroke="#a8703a" stroke-width="0.8"/><path d="M5.5 1.5v8M2 3.5l7 4M9 3.5l-7 4" stroke="#f3d7b0" stroke-width="0.8"/></svg>
<div class="t" style="left:110px;top:293.78px;font-size:8.2px;letter-spacing:-0.3px;color:#2a2a2a;width:117px;overflow:hidden;line-height:12px;height:12px">pit_stage_a1.dtm</div>
<div class="a" style="left:89px;top:311px;width:7px;height:0;border-top:1px dotted #bcbcbc"></div>
<svg class="a" style="left:96px;top:305.3px" width="11" height="11"><path d="M1.5 0.5v6l3 3.5h6" stroke="#a07850" stroke-width="2" fill="none"/><path d="M3.5 0.5v5l2 2.5h5" stroke="#3a9a3a" stroke-width="1" fill="none"/></svg>
<div class="t" style="left:110px;top:305.2px;font-size:8.2px;letter-spacing:-0.3px;color:#2a2a2a;width:117px;overflow:hidden;line-height:12px;height:12px">pit_stage_a1.str</div>
<div class="a" style="left:89px;top:322px;width:7px;height:0;border-top:1px dotted #bcbcbc"></div>
<svg class="a" style="left:96px;top:316.72px" width="11" height="11"><path d="M1.5 0.5v6l3 3.5h6" stroke="#a07850" stroke-width="2" fill="none"/><path d="M3.5 0.5v5l2 2.5h5" stroke="#3a9a3a" stroke-width="1" fill="none"/></svg>
<div class="t" style="left:110px;top:316.62px;font-size:8.2px;letter-spacing:-0.3px;color:#2a2a2a;width:117px;overflow:hidden;line-height:12px;height:12px">teste.str</div>
<div class="a" style="left:89px;top:334px;width:7px;height:0;border-top:1px dotted #bcbcbc"></div>
<svg class="a" style="left:96px;top:328.14px" width="11" height="11"><circle cx="5.5" cy="5.5" r="5" fill="#d9a66a" stroke="#a8703a" stroke-width="0.8"/><path d="M5.5 1.5v8M2 3.5l7 4M9 3.5l-7 4" stroke="#f3d7b0" stroke-width="0.8"/></svg>
<div class="t" style="left:110px;top:328.03999999999996px;font-size:8.2px;letter-spacing:-0.3px;color:#2a2a2a;width:117px;overflow:hidden;line-height:12px;height:12px">topography1.dtm</div>
<div class="a" style="left:89px;top:345px;width:7px;height:0;border-top:1px dotted #bcbcbc"></div>
<svg class="a" style="left:96px;top:339.56px" width="11" height="11"><path d="M1.5 0.5v6l3 3.5h6" stroke="#a07850" stroke-width="2" fill="none"/><path d="M3.5 0.5v5l2 2.5h5" stroke="#3a9a3a" stroke-width="1" fill="none"/></svg>
<div class="t" style="left:110px;top:339.46px;font-size:8.2px;letter-spacing:-0.3px;color:#2a2a2a;width:117px;overflow:hidden;line-height:12px;height:12px">topography1.str</div>
<div class="a" style="left:79px;top:356px;width:3px;height:0;border-top:1px dotted #bcbcbc"></div>
<svg class="a" style="left:71px;top:352.48px" width="8" height="8"><rect x="0.5" y="0.5" width="7" height="7" fill="#f8f8fa" stroke="#b4bac8"/><path d="M2 4h4M4 2v4" stroke="#303a80" stroke-width="0.9"/></svg>
<svg class="a" style="left:81px;top:351.48px" width="12" height="10"><path d="M0 1h4l1 1.5h5v6.5h-10z" fill="#eec060"/><rect x="0" y="3" width="10" height="6" fill="#f6d27c"/></svg>
<div class="t" style="left:96px;top:350.88px;font-size:8.2px;letter-spacing:-0.3px;color:#2a2a2a;width:131px;overflow:hidden;line-height:12px;height:12px">mdl</div>
<div class="a" style="left:79px;top:368px;width:3px;height:0;border-top:1px dotted #bcbcbc"></div>
<svg class="a" style="left:71px;top:363.9px" width="8" height="8"><rect x="0.5" y="0.5" width="7" height="7" fill="#f8f8fa" stroke="#b4bac8"/><path d="M2 4h4M4 2v4" stroke="#303a80" stroke-width="0.9"/></svg>
<svg class="a" style="left:81px;top:362.9px" width="12" height="10"><path d="M0 1h4l1 1.5h5v6.5h-10z" fill="#eec060"/><rect x="0" y="3" width="10" height="6" fill="#f6d27c"/></svg>
<div class="t" style="left:96px;top:362.29999999999995px;font-size:8.2px;letter-spacing:-0.3px;color:#2a2a2a;width:131px;overflow:hidden;line-height:12px;height:12px">polygons</div>
<div class="a" style="left:79px;top:379px;width:3px;height:0;border-top:1px dotted #bcbcbc"></div>
<svg class="a" style="left:71px;top:375.32px" width="8" height="8"><rect x="0.5" y="0.5" width="7" height="7" fill="#f8f8fa" stroke="#b4bac8"/><path d="M2 4h4M4 2v4" stroke="#303a80" stroke-width="0.9"/></svg>
<svg class="a" style="left:81px;top:374.32px" width="12" height="10"><path d="M0 1h4l1 1.5h5v6.5h-10z" fill="#eec060"/><rect x="0" y="3" width="10" height="6" fill="#f6d27c"/></svg>
<div class="t" style="left:96px;top:373.71999999999997px;font-size:8.2px;letter-spacing:-0.3px;color:#2a2a2a;width:131px;overflow:hidden;line-height:12px;height:12px">Scenario</div>
<div class="a" style="left:65.5px;top:391px;width:3.5px;height:0;border-top:1px dotted #bcbcbc"></div>
<svg class="a" style="left:57.5px;top:386.74px" width="8" height="8"><rect x="0.5" y="0.5" width="7" height="7" fill="#f8f8fa" stroke="#b4bac8"/><path d="M2 4h4M4 2v4" stroke="#303a80" stroke-width="0.9"/></svg>
<svg class="a" style="left:68px;top:385.74px" width="12" height="10"><path d="M0 1h4l1 1.5h5v6.5h-10z" fill="#eec060"/><rect x="0" y="3" width="10" height="6" fill="#f6d27c"/></svg>
<div class="t" style="left:82px;top:385.14px;font-size:8.2px;letter-spacing:-0.3px;color:#2a2a2a;width:145px;overflow:hidden;line-height:12px;height:12px">05_Surface_Production_Schedule_Short_T</div>
<div class="a" style="left:65.5px;top:402px;width:3.5px;height:0;border-top:1px dotted #bcbcbc"></div>
<svg class="a" style="left:57.5px;top:398.16px" width="8" height="8"><rect x="0.5" y="0.5" width="7" height="7" fill="#f8f8fa" stroke="#b4bac8"/><path d="M2 4h4M4 2v4" stroke="#303a80" stroke-width="0.9"/></svg>
<svg class="a" style="left:68px;top:397.16px" width="12" height="10"><path d="M0 1h4l1 1.5h5v6.5h-10z" fill="#eec060"/><rect x="0" y="3" width="10" height="6" fill="#f6d27c"/></svg>
<div class="t" style="left:82px;top:396.56px;font-size:8.2px;letter-spacing:-0.3px;color:#2a2a2a;width:145px;overflow:hidden;line-height:12px;height:12px">07_Underground_Scheduling_Setup_Head</div>
<div class="a" style="left:227px;top:134px;width:11px;height:270px;background:#f0f0f0"></div>
<svg class="a" style="left:229px;top:138px" width="8" height="5"><path d="M0.5 4.5l3.5-3.5 3.5 3.5" stroke="#555" fill="none"/></svg>
<svg class="a" style="left:229px;top:396px" width="8" height="5"><path d="M0.8 0.8l3.2 3.2 3.2-3.2" stroke="#555" stroke-width="1.3" fill="none"/></svg>
<div class="a" style="left:228px;top:174px;width:9px;height:61px;background:#cdcdcd"></div>
<div class="a" style="left:2px;top:405px;width:236px;height:12px;background:#f0f0f0"></div>
<div class="a" style="left:14px;top:406px;width:126px;height:10px;background:#cdcdcd"></div>
<svg class="a" style="left:5px;top:407px" width="5" height="8"><path d="M4.5 0.5l-3.5 3.5 3.5 3.5" stroke="#555" fill="none"/></svg>
<svg class="a" style="left:219px;top:407px" width="5" height="8"><path d="M0.5 0.5l3.5 3.5-3.5 3.5" stroke="#555" fill="none"/></svg>
<div class="a" style="left:4px;top:417px;width:56px;height:15px;background:#e2e2e2;border:1px solid #cfcfcf"></div>
<svg class="a" style="left:7px;top:419px" width="12" height="11"><path d="M0.5 2.5h4l1 1h6v7h-11z" fill="#f0c860" stroke="#c9a040" stroke-width="0.8"/><circle cx="6" cy="6.5" r="2.5" fill="#fff" stroke="#88a" stroke-width="0.8"/></svg>
<div class="t" style="left:21px;top:421px;font-size:7.8px;color:#333">Navigator</div>
<svg class="a" style="left:64px;top:418px" width="11" height="12"><rect x="0.5" y="0.5" width="10" height="11" fill="#fff" stroke="#999" stroke-width="0.8"/><rect x="2" y="2" width="2" height="2" fill="#e44"/><rect x="2" y="5" width="2" height="2" fill="#4a4"/><rect x="2" y="8" width="2" height="2" fill="#44e"/><path d="M5 3h4M5 6h4M5 9h4" stroke="#777"/></svg>
<div class="t" style="left:78px;top:421px;font-size:7.8px;color:#333">Legend</div>
<div class="a" style="left:105px;top:418px;width:1px;height:13px;background:#bdbdbd"></div>
<svg class="a" style="left:110px;top:418px" width="12" height="12"><circle cx="6" cy="6" r="5.5" fill="#2b4f78"/><circle cx="4" cy="4" r="2" fill="#5a86b8"/><circle cx="8" cy="8" r="1.8" fill="#1a3050"/></svg>
<div class="t" style="left:125px;top:421px;font-size:7.8px;color:#333">Enterprise Collaboration</div>
<div class="a" style="left:210px;top:418px;width:1px;height:13px;background:#bdbdbd"></div>
<div class="a" style="left:1px;top:436px;width:238px;height:15px;background:#f3f3f3;border:1px solid #d6d6d6"></div>
<div class="t" style="left:4px;top:439.5px;font-size:7.8px;color:#333">Tool properties</div>
<svg class="a" style="left:193px;top:439px" width="10" height="9"><rect x="1" y="3.5" width="5.5" height="4.5" fill="none" stroke="#333" stroke-width="0.9"/><path d="M3 3.5V1h5.5v4.5H6.5" fill="none" stroke="#333" stroke-width="0.9"/></svg>
<svg class="a" style="left:209px;top:438.5px" width="8" height="10"><path d="M2 1h4v4.5h-4z" fill="none" stroke="#333" stroke-width="0.9"/><path d="M1 5.5h6M4 6v3" stroke="#333" stroke-width="0.9"/></svg>
<svg class="a" style="left:222px;top:439.5px" width="8" height="8"><path d="M1 1l6 6M7 1l-6 6" stroke="#555" stroke-width="0.9"/></svg>
<svg class="a" style="left:7px;top:596px" width="13" height="12"><circle cx="4" cy="8" r="3.3" fill="#8aa0b8" stroke="#567" stroke-width="0.8"/><circle cx="9" cy="4" r="3" fill="#a8b8c8" stroke="#567" stroke-width="0.8"/></svg>
<div class="t" style="left:21px;top:598px;font-size:7.8px;color:#333">Properties</div>
<div class="a" style="left:60px;top:594px;width:74px;height:15px;background:#e2e2e2;border:1px solid #cfcfcf"></div>
<svg class="a" style="left:63px;top:596px" width="12" height="12"><path d="M1 11L10 2M2 2l9 9" stroke="#333" stroke-width="1.6"/><path d="M7 0.5l4 2.5-2 2z" fill="#b08020"/><path d="M0.5 3l3-2.5 1.5 2z" fill="#b08020"/></svg>
<div class="t" style="left:78px;top:598px;font-size:7.8px;color:#333">Tool properties</div>
<div class="a" style="left:1px;top:613px;width:238px;height:15px;background:#f3f3f3;border:1px solid #d6d6d6"></div>
<div class="t" style="left:4px;top:617px;font-size:7.8px;color:#333">Layers</div>
<div class="t" style="left:174px;top:617px;font-size:7.8px;color:#333">New</div>
<div class="a" style="left:191px;top:614px;width:1px;height:13px;background:#c8c8c8"></div>
<svg class="a" style="left:195px;top:616px" width="10" height="9"><rect x="1" y="3.5" width="5.5" height="4.5" fill="none" stroke="#333" stroke-width="0.9"/><path d="M3 3.5V1h5.5v4.5H6.5" fill="none" stroke="#333" stroke-width="0.9"/></svg>
<svg class="a" style="left:210px;top:615.5px" width="8" height="10"><path d="M2 1h4v4.5h-4z" fill="none" stroke="#333" stroke-width="0.9"/><path d="M1 5.5h6M4 6v3" stroke="#333" stroke-width="0.9"/></svg>
<svg class="a" style="left:223px;top:616.5px" width="8" height="8"><path d="M1 1l6 6M7 1l-6 6" stroke="#555" stroke-width="0.9"/></svg>
<div class="a" style="left:1px;top:629px;width:238px;height:91px;background:#fff;border:1px solid #d0d0d0;border-top:none"></div>
<svg class="a" style="left:15px;top:633px" width="12" height="10"><rect x="0.5" y="0.5" width="11" height="9" fill="#eef2ff" stroke="#9aa6c8" stroke-width="0.8"/><ellipse cx="6" cy="5" rx="4" ry="2.4" fill="#c8c8e8" stroke="#6a6aa8" stroke-width="0.7"/><circle cx="6" cy="5" r="1.2" fill="#a04060"/></svg>
<svg class="a" style="left:27px;top:630px" width="12" height="13"><path d="M1.5 6V3.5a3 3 0 0 1 6 0" stroke="#c8a030" stroke-width="1.4" fill="none"/><rect x="4" y="6" width="8" height="7" fill="#f0c850" stroke="#b89030" stroke-width="0.8"/></svg>
<div class="t" style="left:48px;top:634px;font-size:7.8px;color:#222">main graphics layer</div>
<div class="a" style="left:40px;top:646px;width:199px;height:16px;background:#0c76d8"></div>
<svg class="a" style="left:3px;top:649px" width="11" height="10"><rect x="0.5" y="0.5" width="10" height="9" fill="#fff" stroke="#9aa6c8" stroke-width="0.8"/><path d="M2 5l2.5 2.5 4.5-5" stroke="#2a8a2a" stroke-width="1.5" fill="none"/></svg>
<svg class="a" style="left:15px;top:649px" width="12" height="10"><rect x="0.5" y="0.5" width="11" height="9" fill="#eef2ff" stroke="#9aa6c8" stroke-width="0.8"/><ellipse cx="6" cy="5" rx="4" ry="2.4" fill="#c8c8e8" stroke="#6a6aa8" stroke-width="0.7"/><circle cx="6" cy="5" r="1.2" fill="#a04060"/></svg>
<svg class="a" style="left:27px;top:646px" width="12" height="13"><path d="M1.5 6V3.5a3 3 0 0 1 6 0" stroke="#c8a030" stroke-width="1.4" fill="none"/><rect x="4" y="6" width="8" height="7" fill="#f0c850" stroke="#b89030" stroke-width="0.8"/></svg>
<div class="t" style="left:49px;top:650px;font-size:8.6px;color:#fff;font-weight:bold;font-style:italic">dump_design1.dtm</div></div><!--/left-->

<!-- message area -->
<div id="msg"><div class="a" style="left:241px;top:640px;width:719px;height:66px;background:#fff;border:1px solid #bdbdbd;border-right:none"></div>
<div class="a" style="left:242px;top:641px;width:300px;height:2px;overflow:hidden"><div class="t" style="left:2px;top:-7px;font-size:7.5px;color:#333">Drawing commencing - Please wait</div></div>
<div class="t" style="left:244px;top:645.7px;font-size:8.1px;letter-spacing:-0.3px;color:#222">Processing dump_design1.dtm</div>
<div class="t" style="left:244px;top:655.7px;font-size:8.1px;letter-spacing:-0.3px;color:#222">Drawing commencing - Please wait</div>
<div class="t" style="left:244px;top:665.7px;font-size:8.1px;letter-spacing:-0.3px;color:#222">Processing dump_design1.dtm</div>
<div class="t" style="left:244px;top:675.7px;font-size:8.1px;letter-spacing:-0.3px;color:#222">Drawing commencing - Please wait</div>
<div class="t" style="left:244px;top:685.7px;font-size:8.1px;letter-spacing:-0.16px;color:#222">Ymin = 79553.742, Ymax = 80331.258, Xmin = 3388.742, Xmax = 3891.258</div>
<div class="t" style="left:244px;top:695.7px;font-size:8.1px;letter-spacing:-0.17px;color:#222">Zmin = 375, Zmax = 440</div>
<div class="a" style="left:241px;top:706px;width:719px;height:14px;background:#f0f0f0;border:1px solid #bdbdbd;border-right:none;border-top:none"></div>
<div class="t" style="left:244px;top:708.5px;font-size:7.4px;color:#8a8a8a">DESIGN GRID (GRID)</div>
<div class="a" style="left:0;top:721px;width:960px;height:19px;background:#f0f0f0;border-top:1px solid #d4d4d4"></div>
<div class="a" style="left:0;top:738.5px;width:960px;height:1.5px;background:#3a3a3a"></div>
<svg class="a" style="left:1px;top:723px" width="12" height="14"><path d="M1 1l5 6.5M11 1L6 7.5V13.5" stroke="#3aa040" stroke-width="2.6" fill="none"/></svg>
<div class="t" style="left:15px;top:727.2px;font-size:7.8px;color:#333">79950.974</div>
<div class="a" style="left:81px;top:722px;width:1px;height:16px;background:#cfcfcf"></div>
<svg class="a" style="left:82px;top:723px" width="12" height="14"><path d="M1.5 1.5l9 11.5M10.5 1.5l-9 11.5" stroke="#d84040" stroke-width="2.6" fill="none"/></svg>
<div class="t" style="left:96px;top:727.2px;font-size:7.8px;color:#333">3190.397</div>
<div class="a" style="left:162px;top:722px;width:1px;height:16px;background:#cfcfcf"></div>
<svg class="a" style="left:163px;top:723px" width="12" height="14"><path d="M1.5 1.5h9l-9 11h9.5" stroke="#4a7ae0" stroke-width="2.4" fill="none"/></svg>
<div class="t" style="left:177px;top:727.2px;font-size:7.8px;color:#333">407.500</div>
<div class="a" style="left:240px;top:722px;width:1px;height:16px;background:#cfcfcf"></div>
<div class="a" style="left:243px;top:723px;width:58px;height:14px;background:#fafafa;border:1px solid #a8a8a8"></div>
<div class="a" style="left:270px;top:724px;width:1px;height:12px;background:#999"></div>
<div class="t" style="left:245px;top:727.2px;font-size:7.8px;color:#222">Str = 1</div>
<div class="t" style="left:272px;top:727.2px;font-size:7.8px;color:#222">0.000%</div>
<div class="t" style="left:307px;top:727.2px;font-size:7.8px;color:#222">3D</div>
<div class="a" style="left:322px;top:724px;width:1px;height:13px;background:#c8c8c8"></div>
<div class="t" style="left:326px;top:727.2px;font-size:7.8px;color:#222">Plan</div>
<div class="a" style="left:347px;top:724px;width:1px;height:13px;background:#c8c8c8"></div>
<div class="t" style="left:351px;top:727.2px;font-size:7.8px;color:#222">Dynamic</div>
<div class="a" style="left:385px;top:724px;width:1px;height:13px;background:#c8c8c8"></div>
<svg class="a" style="left:389px;top:724px" width="12" height="12"><path d="M6 0.5l5 2.5v6l-5 2.5-5-2.5v-6z" fill="#5fb040"/><path d="M1 3l5 2.5 5-2.5M6 5.5v6" stroke="#2f7a20" stroke-width="0.8" fill="none"/></svg>
<div class="t" style="left:402px;top:727.2px;font-size:7.8px;color:#222">dump_design1</div>
<svg class="a" style="left:459px;top:729px" width="5" height="3"><path d="M0 0h5l-2.5 3z" fill="#333"/></svg></div><!--/msg-->

<!-- status bar -->


<!-- dialog -->
<div id="dlg"><div class="a" style="left:303.5px;top:174px;width:288px;height:191.5px;background:#f0f0f0;border:1px solid #8e8e8e;box-shadow:0 0 3px rgba(0,0,0,0.3)"></div>
<div class="a" style="left:304.5px;top:175px;width:286px;height:22px;background:#fff"></div>
<div class="t" style="left:324px;top:181.5px;font-size:8.4px;color:#a0a0a0">Design grid parameters</div>
<svg class="a" style="left:576.5px;top:181px" width="9" height="9"><path d="M0.5 0.5l8 8M8.5 0.5l-8 8" stroke="#8a8a8a" stroke-width="0.9"/></svg>
<div class="t" style="left:304.5px;top:203px;font-size:7.6px;color:#222;">Grid string number</div>
<div class="a" style="left:372px;top:200px;width:41px;height:13.5px;background:#fff;border:1px solid #c6c6c6"></div><div class="t" style="left:374.5px;top:202.75px;font-size:7.6px;color:#222">1</div>
<div class="t" style="right:592.5px;top:217px;font-size:7.6px;color:#222;">Grid layer name</div>
<div class="a" style="left:372px;top:214px;width:159px;height:14px;background:#fff;border:1px solid #c6c6c6"></div><div class="t" style="left:374.5px;top:217.0px;font-size:7.6px;color:#222">TESTE</div>
<div class="t" style="left:305.5px;top:244.5px;font-size:7.6px;color:#222;font-weight:bold;">Define the grid origin</div>
<div class="t" style="left:305px;top:254px;font-size:7px;color:#222;">Y</div>
<div class="a" style="left:309px;top:253px;width:81px;height:14px;background:#fff;border:1px solid #c6c6c6"></div><div class="t" style="left:311.5px;top:256.0px;font-size:7.6px;color:#222">79547.056</div>
<div class="t" style="left:399.5px;top:254px;font-size:7px;color:#222;">X</div>
<div class="a" style="left:404px;top:253px;width:81px;height:14px;background:#fff;border:1px solid #c6c6c6"></div><div class="t" style="left:406.5px;top:256.0px;font-size:7.6px;color:#222">3281.85</div>
<div class="t" style="left:494px;top:254px;font-size:7px;color:#222;">Z</div>
<div class="a" style="left:498px;top:253px;width:81px;height:14px;background:#fff;border:1px solid #c6c6c6"></div><div class="t" style="left:500.5px;top:256.0px;font-size:7.6px;color:#222">407.5</div>
<div class="t" style="left:370.5px;top:283px;font-size:7px;color:#222;">Y</div>
<div class="t" style="left:461.5px;top:283px;font-size:7px;color:#222;">X</div>
<div class="t" style="right:593.5px;top:295.5px;font-size:7.6px;color:#222;">Grid step size</div>
<div class="a" style="left:371px;top:292.5px;width:81px;height:14.0px;background:#fff;border:1px solid #c6c6c6"></div><div class="t" style="left:373.5px;top:295.5px;font-size:7.6px;color:#222">10</div>
<div class="a" style="left:461px;top:292.5px;width:81px;height:14.0px;background:#fff;border:1px solid #c6c6c6"></div><div class="t" style="left:463.5px;top:295.5px;font-size:7.6px;color:#222">10</div>
<div class="t" style="right:593.5px;top:309.5px;font-size:7.6px;color:#222;">Number of steps</div>
<div class="a" style="left:371px;top:306.5px;width:81px;height:14.0px;background:#fff;border:1px solid #c6c6c6"></div><div class="t" style="left:373.5px;top:309.5px;font-size:7.6px;color:#222">80</div>
<div class="a" style="left:461px;top:306.5px;width:81px;height:14.0px;background:#fff;border:1px solid #c6c6c6"></div><div class="t" style="left:463.5px;top:309.5px;font-size:7.6px;color:#222">80</div>
<div class="t" style="right:593.5px;top:323.5px;font-size:7.6px;color:#222;">Dimensions of grid</div>
<div class="a" style="left:371px;top:320.5px;width:81px;height:14.0px;background:#ececec;border:1px solid #c6c6c6"></div><div class="t" style="left:373.5px;top:323.5px;font-size:7.6px;color:#9a9a9a">800</div>
<div class="a" style="left:461px;top:320.5px;width:81px;height:14.0px;background:#ececec;border:1px solid #c6c6c6"></div><div class="t" style="left:463.5px;top:323.5px;font-size:7.6px;color:#9a9a9a">100</div>
<div class="t" style="left:304.5px;top:336px;font-size:7.6px;color:#222;">Dimension = step size * number of steps</div>
<div class="a" style="left:304.5px;top:345px;width:286px;height:20px;background:#f4f4f4;border-top:1px solid #dadada"></div>
<div class="a" style="left:307px;top:348.5px;width:13px;height:13px;background:#e8e8e8;border:1px solid #c0c0c0"></div>
<svg class="a" style="left:308px;top:349.5px" width="12" height="12"><circle cx="6" cy="6" r="5.3" fill="#4a8ad8" stroke="#2a5aa8" stroke-width="0.7"/><text x="6" y="9" font-size="8" font-family="Liberation Sans" font-weight="bold" fill="#fff" text-anchor="middle">?</text></svg>
<div class="a" style="left:474px;top:348.5px;width:55px;height:14px;background:#e8f2fb;border:1px solid #4a98e0"></div>
<svg class="a" style="left:484px;top:350px" width="13" height="12"><path d="M1.5 6.5l3.5 4 6.5-9" stroke="#32a832" stroke-width="2.4" fill="none"/></svg>
<div class="t" style="left:498px;top:352px;font-size:7.6px;color:#222">Apply</div>
<div class="a" style="left:533px;top:348.5px;width:54.5px;height:14px;background:#e1e1e1;border:1px solid #adadad"></div>
<svg class="a" style="left:541px;top:350px" width="12" height="11"><path d="M1.5 1.5l9 8M10.5 1.5l-9 8" stroke="#e02828" stroke-width="2.4"/></svg>
<div class="t" style="left:554.5px;top:352px;font-size:7.6px;color:#222">Cancel</div>
<svg class="a" style="left:517px;top:354px" width="10" height="14"><path d="M0.5 0.5v11l2.8-2.5 2 4.2 1.6-0.8-2-4h3.8z" fill="#fff" stroke="#222" stroke-width="0.8"/></svg></div><!--/dlg-->
</body></html>
